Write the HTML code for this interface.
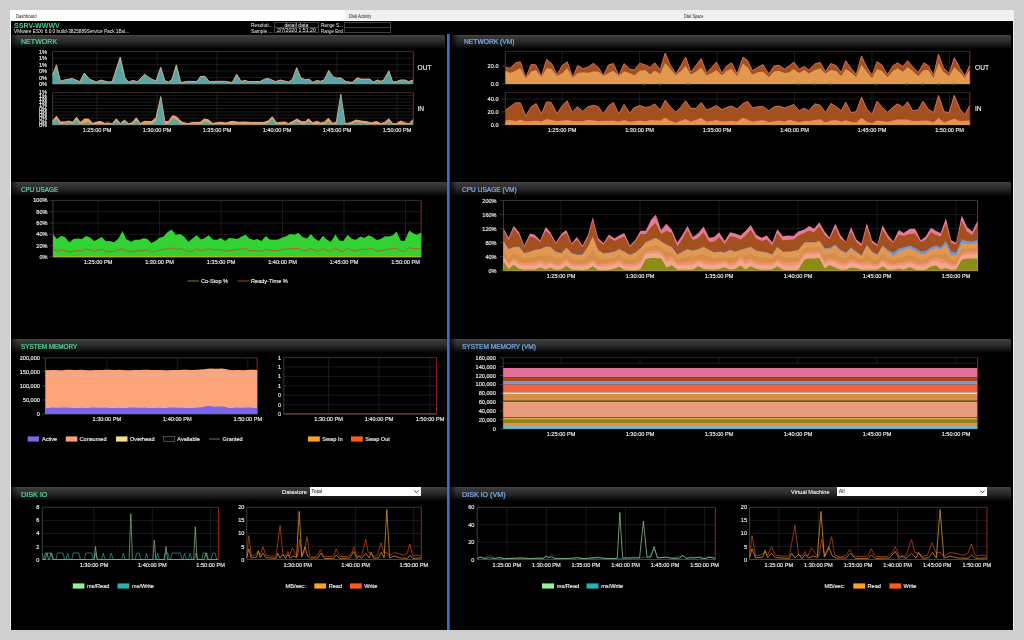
<!DOCTYPE html>
<html lang="en"><head><meta charset="utf-8"><title>SSRV-WWWV Dashboard</title>
<style>
html,body{margin:0;padding:0}
body{width:1024px;height:640px;overflow:hidden;background:#cfcfcf;font-family:"Liberation Sans", sans-serif;position:relative}
.win{position:absolute;left:9.9px;top:10.1px;width:1003.8px;height:620.4px;background:#f0f0f0}
.blk{position:absolute;left:10.9px;top:20.6px;width:1002px;height:609.2px;background:#000}
.tabs{position:absolute;left:10px;top:10.1px;width:1003.4px;height:10.6px;background:#f0f0f0;border-bottom:0.8px solid #fff;box-sizing:border-box;font-size:4.9px;color:#222;line-height:14.2px;overflow:hidden}
.tabs span{position:absolute;top:0;height:10.6px}
.tabs .tsel{position:absolute;left:0;top:0;width:335px;height:10.6px;background:#fff}
.host{position:absolute;left:14.2px;top:21.1px;font-size:7.5px;font-weight:bold;color:#46d08a;line-height:9px;white-space:nowrap}
.ver{position:absolute;left:14px;top:28.2px;font-size:5.25px;color:#f4f4f4;line-height:6px;white-space:nowrap}
.fl{position:absolute;font-size:5.3px;color:#f0f0f0;line-height:6px;white-space:nowrap}
.fb{position:absolute;height:5.9px;border:0.6px solid #404040;font-size:5.2px;color:#f4f4f4;line-height:5.2px;text-align:center;box-sizing:border-box;white-space:nowrap}
.sh{position:absolute;background:linear-gradient(#4a4a4a 0,#3c3c3c 8%,#2a2a2a 45%,#0e0e0e 85%,#000 100%);border-radius:1.5px 1.5px 0 0;font-size:7.4px;line-height:14.6px;white-space:nowrap;overflow:hidden}
.sh span{position:relative;top:0.9px;-webkit-text-stroke:0.22px currentColor}
.sh::before{content:"";position:absolute;left:0;top:0;bottom:0;width:7px;background:linear-gradient(90deg,rgba(0,0,0,.7),rgba(0,0,0,0))}
.div{position:absolute;left:446.6px;top:34px;width:3.3px;height:596px;background:linear-gradient(90deg,#2a55a8,#477ad8 25%,#3a68c4 60%,#15307a)}
.ddl{position:absolute;top:488.4px;font-size:6.1px;-webkit-text-stroke:0.1px #f4f4f4;color:#f4f4f4;line-height:7px;white-space:nowrap}
.dd{position:absolute;top:487.4px;height:8.8px;background:#fff;color:#111;font-size:5.2px;line-height:8.2px;padding-left:1.6px;box-sizing:border-box}
.dd svg{position:absolute;right:2.2px;top:2.6px}
svg.c{position:absolute;left:0;top:0}
svg.c text{font-family:"Liberation Sans", sans-serif;stroke:#f2f2f2;stroke-width:0.14px}
#app{position:absolute;left:0;top:0;width:1024px;height:640px;filter:blur(0.35px)}
</style></head><body>
<div id="app">
<div class="win"></div><div class="blk"></div>
<div class="tabs"><div class="tsel"></div><span style="left:6.2px;font-size:4.9px;display:inline-block;transform-origin:0 50%;transform:scaleX(0.8593)">Dashboard</span><span style="left:339.2px;font-size:4.9px;display:inline-block;transform-origin:0 50%;transform:scaleX(0.8532)">Disk Activity</span><span style="left:674.2px;font-size:4.9px;display:inline-block;transform-origin:0 50%;transform:scaleX(0.7828)">Disk Space</span></div>
<div class="host" style="font-size:7.5px;display:inline-block;transform-origin:0 50%;transform:scaleX(0.9421)">SSRV-WWWV</div>
<div class="ver" style="font-size:5.2px;display:inline-block;transform-origin:0 50%;transform:scaleX(0.9173)">VMware ESXi 6.0.0 build-3825889Service Pack 1Bui...</div>
<div class="fl" style="left:250.6px;top:22.1px;font-size:5.3px;display:inline-block;transform-origin:0 50%;transform:scaleX(0.9166)">Resoluti...</div>
<div class="fl" style="left:250.6px;top:27.9px;font-size:5.3px;display:inline-block;transform-origin:0 50%;transform:scaleX(0.9053)">Sample ...</div>
<div class="fb" style="left:273.6px;top:22.1px;width:45.6px">detail data</div>
<div class="fb" style="left:273.6px;top:27.4px;width:45.6px">2/7/2020 1:51:20</div>
<div class="fl" style="left:320.8px;top:22.1px;font-size:5.3px;display:inline-block;transform-origin:0 50%;transform:scaleX(0.8785)">Range S...</div>
<div class="fl" style="left:320.8px;top:27.9px;font-size:5.3px;display:inline-block;transform-origin:0 50%;transform:scaleX(0.8295)">Range End</div>
<div class="fb" style="left:344.4px;top:22.1px;width:46.4px"></div>
<div class="fb" style="left:344.4px;top:27.4px;width:46.4px"></div>
<div class="sh" style="left:11.2px;top:34.6px;width:434px;height:14px"><span style="color:#55d898;margin-left:9.7px;font-size:7.4px;display:inline-block;transform-origin:0 50%;transform:scaleX(0.9571)">NETWORK</span></div><div class="sh" style="left:452px;top:34.6px;width:559px;height:14px"><span style="color:#7caeee;margin-left:12.4px;font-size:7.4px;display:inline-block;transform-origin:0 50%;transform:scaleX(0.9051)">NETWORK (VM)</span></div><div class="sh" style="left:11.2px;top:182.0px;width:435.4px;height:14px"><span style="color:#55d898;margin-left:9.4px;font-size:7.4px;display:inline-block;transform-origin:0 50%;transform:scaleX(0.8534)">CPU USAGE</span></div><div class="sh" style="left:450px;top:182.0px;width:561px;height:14px"><span style="color:#7caeee;margin-left:11.6px;font-size:7.4px;display:inline-block;transform-origin:0 50%;transform:scaleX(0.8885)">CPU USAGE (VM)</span></div><div class="sh" style="left:11.2px;top:339.4px;width:435.4px;height:14px"><span style="color:#55d898;margin-left:9.4px;font-size:7.4px;display:inline-block;transform-origin:0 50%;transform:scaleX(0.8575)">SYSTEM MEMORY</span></div><div class="sh" style="left:450px;top:339.4px;width:561px;height:14px"><span style="color:#7caeee;margin-left:11.6px;font-size:7.4px;display:inline-block;transform-origin:0 50%;transform:scaleX(0.8863)">SYSTEM MEMORY (VM)</span></div><div class="sh" style="left:11.2px;top:486.8px;width:435.4px;height:14px"><span style="color:#55d898;margin-left:9.4px;font-size:7.4px;display:inline-block;transform-origin:0 50%;transform:scaleX(0.9764)">DISK IO</span></div><div class="sh" style="left:450px;top:486.8px;width:561px;height:14px"><span style="color:#7caeee;margin-left:11.6px;font-size:7.4px;display:inline-block;transform-origin:0 50%;transform:scaleX(0.9641)">DISK IO (VM)</span></div>
<div class="div"></div>
<div class="ddl" style="left:282.4px;font-size:6.1px;display:inline-block;transform-origin:0 50%;transform:scaleX(0.9453)">Datastore</div>
<div class="dd" style="left:309.6px;width:111.2px">Total<svg width="5" height="3.4" viewBox="0 0 5 3.4"><path d="M0.4 0.5 L2.5 2.7 L4.6 0.5" fill="none" stroke="#222" stroke-width="0.9"/></svg></div>
<div class="ddl" style="left:790.8px;font-size:6.1px;display:inline-block;transform-origin:0 50%;transform:scaleX(0.9205)">Virtual Machine</div>
<div class="dd" style="left:837.2px;width:149.6px">All<svg width="5" height="3.4" viewBox="0 0 5 3.4"><path d="M0.4 0.5 L2.5 2.7 L4.6 0.5" fill="none" stroke="#222" stroke-width="0.9"/></svg></div>
<svg class="c" width="1024" height="640" viewBox="0 0 1024 640">
<line x1="52.6" y1="51.60" x2="413.3" y2="51.60" stroke="#2c2c2c" stroke-width="0.6"/><line x1="52.6" y1="58.08" x2="413.3" y2="58.08" stroke="#2c2c2c" stroke-width="0.6"/><line x1="52.6" y1="64.56" x2="413.3" y2="64.56" stroke="#2c2c2c" stroke-width="0.6"/><line x1="52.6" y1="71.04" x2="413.3" y2="71.04" stroke="#2c2c2c" stroke-width="0.6"/><line x1="52.6" y1="77.52" x2="413.3" y2="77.52" stroke="#2c2c2c" stroke-width="0.6"/><line x1="52.6" y1="84.00" x2="413.3" y2="84.00" stroke="#2c2c2c" stroke-width="0.6"/><line x1="97.00" y1="51.6" x2="97.00" y2="84.0" stroke="#2c2c2c" stroke-width="0.6"/><line x1="157.00" y1="51.6" x2="157.00" y2="84.0" stroke="#2c2c2c" stroke-width="0.6"/><line x1="217.00" y1="51.6" x2="217.00" y2="84.0" stroke="#2c2c2c" stroke-width="0.6"/><line x1="277.00" y1="51.6" x2="277.00" y2="84.0" stroke="#2c2c2c" stroke-width="0.6"/><line x1="337.00" y1="51.6" x2="337.00" y2="84.0" stroke="#2c2c2c" stroke-width="0.6"/><line x1="397.00" y1="51.6" x2="397.00" y2="84.0" stroke="#2c2c2c" stroke-width="0.6"/><line x1="52.6" y1="51.60" x2="413.3" y2="51.60" stroke="#403836" stroke-width="0.7"/><line x1="52.60" y1="51.6" x2="52.60" y2="84.0" stroke="#555555" stroke-width="0.7"/><line x1="52.6" y1="84.00" x2="413.3" y2="84.00" stroke="#555555" stroke-width="0.7"/><line x1="413.30" y1="51.6" x2="413.30" y2="84.0" stroke="#9a2218" stroke-width="1.0"/><text x="47.1" y="53.6" font-size="5.6" text-anchor="end" fill="#f2f2f2" font-weight="normal" >1%</text><text x="47.1" y="60.1" font-size="5.6" text-anchor="end" fill="#f2f2f2" font-weight="normal" >1%</text><text x="47.1" y="66.6" font-size="5.6" text-anchor="end" fill="#f2f2f2" font-weight="normal" >1%</text><text x="47.1" y="73.0" font-size="5.6" text-anchor="end" fill="#f2f2f2" font-weight="normal" >0%</text><text x="47.1" y="79.5" font-size="5.6" text-anchor="end" fill="#f2f2f2" font-weight="normal" >0%</text><text x="47.1" y="86.0" font-size="5.6" text-anchor="end" fill="#f2f2f2" font-weight="normal" >0%</text><polygon points="52.5,84.0 52.5,75.3 56.4,64.8 60.4,81.3 65.2,79.7 72.2,78.5 79.8,81.6 84.3,73.0 89.4,79.1 96.3,82.0 100.8,80.1 108.4,82.0 112.2,81.6 120.2,57.1 124.9,77.8 128.7,82.0 132.5,80.4 137.6,81.6 144.6,74.3 150.3,78.5 156.0,81.0 160.7,67.3 164.9,80.8 168.7,82.0 172.1,79.1 176.3,64.8 180.8,82.5 187.8,81.3 196.7,81.6 200.5,76.6 204.9,76.2 209.4,81.6 216.3,81.3 224.6,81.3 232.2,82.5 236.7,74.3 241.1,81.3 244.9,80.4 248.7,81.6 260.1,81.6 264.6,79.1 268.4,78.5 275.4,81.6 280.4,80.0 288.7,82.0 292.5,79.1 296.7,67.7 300.8,77.8 305.2,79.7 309.0,79.1 312.9,82.3 316.7,80.4 320.5,81.3 324.3,79.7 328.7,70.5 333.2,77.0 337.0,78.2 340.8,77.8 345.9,81.6 352.2,82.3 357.3,77.8 361.1,79.1 370.0,79.1 373.1,82.0 377.6,80.0 380.8,81.3 383.9,79.7 388.8,70.8 392.8,82.0 396.6,81.6 400.4,80.0 404.9,80.0 408.7,81.6 412.9,80.0 412.9,84.0" fill="#5aa5a8" /><polyline points="52.5,75.3 56.4,64.8 60.4,81.3 65.2,79.7 72.2,78.5 79.8,81.6 84.3,73.0 89.4,79.1 96.3,82.0 100.8,80.1 108.4,82.0 112.2,81.6 120.2,57.1 124.9,77.8 128.7,82.0 132.5,80.4 137.6,81.6 144.6,74.3 150.3,78.5 156.0,81.0 160.7,67.3 164.9,80.8 168.7,82.0 172.1,79.1 176.3,64.8 180.8,82.5 187.8,81.3 196.7,81.6 200.5,76.6 204.9,76.2 209.4,81.6 216.3,81.3 224.6,81.3 232.2,82.5 236.7,74.3 241.1,81.3 244.9,80.4 248.7,81.6 260.1,81.6 264.6,79.1 268.4,78.5 275.4,81.6 280.4,80.0 288.7,82.0 292.5,79.1 296.7,67.7 300.8,77.8 305.2,79.7 309.0,79.1 312.9,82.3 316.7,80.4 320.5,81.3 324.3,79.7 328.7,70.5 333.2,77.0 337.0,78.2 340.8,77.8 345.9,81.6 352.2,82.3 357.3,77.8 361.1,79.1 370.0,79.1 373.1,82.0 377.6,80.0 380.8,81.3 383.9,79.7 388.8,70.8 392.8,82.0 396.6,81.6 400.4,80.0 404.9,80.0 408.7,81.6 412.9,80.0" fill="none" stroke="#f0b48a" stroke-width="0.9" stroke-linejoin="round"/><text x="417.5" y="69.6" font-size="6.6" text-anchor="start" fill="#f2f2f2" font-weight="normal" >OUT</text>
<line x1="52.6" y1="92.40" x2="413.3" y2="92.40" stroke="#2c2c2c" stroke-width="0.6"/><line x1="52.6" y1="95.64" x2="413.3" y2="95.64" stroke="#2c2c2c" stroke-width="0.6"/><line x1="52.6" y1="98.88" x2="413.3" y2="98.88" stroke="#2c2c2c" stroke-width="0.6"/><line x1="52.6" y1="102.12" x2="413.3" y2="102.12" stroke="#2c2c2c" stroke-width="0.6"/><line x1="52.6" y1="105.36" x2="413.3" y2="105.36" stroke="#2c2c2c" stroke-width="0.6"/><line x1="52.6" y1="108.60" x2="413.3" y2="108.60" stroke="#2c2c2c" stroke-width="0.6"/><line x1="52.6" y1="111.84" x2="413.3" y2="111.84" stroke="#2c2c2c" stroke-width="0.6"/><line x1="52.6" y1="115.08" x2="413.3" y2="115.08" stroke="#2c2c2c" stroke-width="0.6"/><line x1="52.6" y1="118.32" x2="413.3" y2="118.32" stroke="#2c2c2c" stroke-width="0.6"/><line x1="52.6" y1="121.56" x2="413.3" y2="121.56" stroke="#2c2c2c" stroke-width="0.6"/><line x1="52.6" y1="124.80" x2="413.3" y2="124.80" stroke="#2c2c2c" stroke-width="0.6"/><line x1="97.00" y1="92.4" x2="97.00" y2="124.8" stroke="#2c2c2c" stroke-width="0.6"/><line x1="157.00" y1="92.4" x2="157.00" y2="124.8" stroke="#2c2c2c" stroke-width="0.6"/><line x1="217.00" y1="92.4" x2="217.00" y2="124.8" stroke="#2c2c2c" stroke-width="0.6"/><line x1="277.00" y1="92.4" x2="277.00" y2="124.8" stroke="#2c2c2c" stroke-width="0.6"/><line x1="337.00" y1="92.4" x2="337.00" y2="124.8" stroke="#2c2c2c" stroke-width="0.6"/><line x1="397.00" y1="92.4" x2="397.00" y2="124.8" stroke="#2c2c2c" stroke-width="0.6"/><line x1="52.6" y1="92.40" x2="413.3" y2="92.40" stroke="#403836" stroke-width="0.7"/><line x1="52.60" y1="92.4" x2="52.60" y2="124.8" stroke="#555555" stroke-width="0.7"/><line x1="52.6" y1="124.80" x2="413.3" y2="124.80" stroke="#555555" stroke-width="0.7"/><line x1="413.30" y1="92.4" x2="413.30" y2="124.8" stroke="#9a2218" stroke-width="1.0"/><text x="47.1" y="94.4" font-size="5.6" text-anchor="end" fill="#f2f2f2" font-weight="normal" >1%</text><text x="47.1" y="97.6" font-size="5.6" text-anchor="end" fill="#f2f2f2" font-weight="normal" >1%</text><text x="47.1" y="100.9" font-size="5.6" text-anchor="end" fill="#f2f2f2" font-weight="normal" >1%</text><text x="47.1" y="104.1" font-size="5.6" text-anchor="end" fill="#f2f2f2" font-weight="normal" >1%</text><text x="47.1" y="107.4" font-size="5.6" text-anchor="end" fill="#f2f2f2" font-weight="normal" >1%</text><text x="47.1" y="110.6" font-size="5.6" text-anchor="end" fill="#f2f2f2" font-weight="normal" >0%</text><text x="47.1" y="113.8" font-size="5.6" text-anchor="end" fill="#f2f2f2" font-weight="normal" >0%</text><text x="47.1" y="117.1" font-size="5.6" text-anchor="end" fill="#f2f2f2" font-weight="normal" >0%</text><text x="47.1" y="120.3" font-size="5.6" text-anchor="end" fill="#f2f2f2" font-weight="normal" >0%</text><text x="47.1" y="123.6" font-size="5.6" text-anchor="end" fill="#f2f2f2" font-weight="normal" >0%</text><text x="47.1" y="126.8" font-size="5.6" text-anchor="end" fill="#f2f2f2" font-weight="normal" >0%</text><text x="97.0" y="132.2" font-size="5.6" text-anchor="middle" fill="#f2f2f2" font-weight="normal" >1:25:00 PM</text><text x="157.0" y="132.2" font-size="5.6" text-anchor="middle" fill="#f2f2f2" font-weight="normal" >1:30:00 PM</text><text x="217.0" y="132.2" font-size="5.6" text-anchor="middle" fill="#f2f2f2" font-weight="normal" >1:35:00 PM</text><text x="277.0" y="132.2" font-size="5.6" text-anchor="middle" fill="#f2f2f2" font-weight="normal" >1:40:00 PM</text><text x="337.0" y="132.2" font-size="5.6" text-anchor="middle" fill="#f2f2f2" font-weight="normal" >1:45:00 PM</text><text x="397.0" y="132.2" font-size="5.6" text-anchor="middle" fill="#f2f2f2" font-weight="normal" >1:50:00 PM</text><polygon points="52.5,124.8 52.5,121.3 56.4,116.2 60.4,122.0 65.2,122.0 68.4,121.0 72.8,122.3 76.4,117.2 80.5,122.5 84.3,119.1 88.7,119.1 92.5,123.3 100.2,121.3 104.6,123.3 108.4,122.9 112.2,123.8 116.3,118.8 120.5,123.5 124.3,120.0 128.7,123.8 132.5,122.5 136.3,117.8 140.4,123.5 144.6,121.3 151.6,121.6 156.0,117.8 160.8,96.6 164.9,121.6 168.7,121.3 172.5,115.7 176.3,116.6 180.0,120.4 182.7,122.5 187.8,123.5 192.8,122.5 200.5,122.3 204.3,119.1 208.1,119.7 212.5,123.3 220.2,122.3 225.9,122.9 232.2,121.3 238.6,122.3 244.3,122.0 251.2,122.5 263.9,122.5 268.4,120.8 272.2,116.6 276.6,122.9 284.3,122.0 288.7,123.5 292.5,121.6 296.9,119.1 301.4,121.6 305.2,122.0 308.4,118.8 312.9,122.9 316.7,121.3 320.5,122.9 324.3,122.3 328.3,118.2 332.5,123.3 336.3,122.3 340.8,94.3 345.2,123.5 349.7,122.9 356.0,120.0 361.1,121.0 366.2,121.6 371.2,122.9 376.3,121.6 380.8,123.5 384.6,122.5 388.8,118.8 392.8,123.8 396.6,123.5 400.8,121.0 404.9,122.9 409.3,123.5 412.9,119.5 412.9,124.8" fill="#f09a60" /><polyline points="52.5,121.3 56.4,116.2 60.4,122.0 65.2,122.0 68.4,121.0 72.8,122.3 76.4,117.2 80.5,122.5 84.3,119.1 88.7,119.1 92.5,123.3 100.2,121.3 104.6,123.3 108.4,122.9 112.2,123.8 116.3,118.8 120.5,123.5 124.3,120.0 128.7,123.8 132.5,122.5 136.3,117.8 140.4,123.5 144.6,121.3 151.6,121.6 156.0,117.8 160.8,96.6 164.9,121.6 168.7,121.3 172.5,115.7 176.3,116.6 180.0,120.4 182.7,122.5 187.8,123.5 192.8,122.5 200.5,122.3 204.3,119.1 208.1,119.7 212.5,123.3 220.2,122.3 225.9,122.9 232.2,121.3 238.6,122.3 244.3,122.0 251.2,122.5 263.9,122.5 268.4,120.8 272.2,116.6 276.6,122.9 284.3,122.0 288.7,123.5 292.5,121.6 296.9,119.1 301.4,121.6 305.2,122.0 308.4,118.8 312.9,122.9 316.7,121.3 320.5,122.9 324.3,122.3 328.3,118.2 332.5,123.3 336.3,122.3 340.8,94.3 345.2,123.5 349.7,122.9 356.0,120.0 361.1,121.0 366.2,121.6 371.2,122.9 376.3,121.6 380.8,123.5 384.6,122.5 388.8,118.8 392.8,123.8 396.6,123.5 400.8,121.0 404.9,122.9 409.3,123.5 412.9,119.5" fill="none" stroke="#f5b088" stroke-width="0.9" stroke-linejoin="round"/><polygon points="52.5,124.8 52.5,122.3 56.4,119.1 60.4,124.2 68.4,122.3 72.8,124.2 76.4,119.7 80.5,124.2 84.3,122.9 88.7,122.3 92.5,124.6 112.2,124.6 116.3,120.4 120.5,124.6 124.3,121.6 128.7,124.6 132.5,124.2 136.3,120.4 140.4,124.6 151.6,124.2 156.0,121.0 160.8,97.5 164.9,124.2 168.7,123.5 172.5,118.5 176.3,119.7 180.0,122.9 182.7,124.6 200.5,124.6 204.3,121.6 208.1,122.3 212.5,124.6 263.9,124.6 268.4,122.9 272.2,118.5 276.6,124.6 288.7,124.6 292.5,123.5 296.9,121.3 301.4,124.2 305.2,124.2 308.4,121.3 312.9,124.6 324.3,124.6 328.3,121.0 332.5,124.6 336.3,124.2 340.8,95.0 345.2,124.6 349.7,124.6 356.0,122.0 361.1,122.9 366.2,123.5 371.2,124.6 384.6,124.6 388.8,121.3 392.8,124.6 409.3,124.6 412.9,121.3 412.9,124.8" fill="#5aa5a8" /><text x="417.5" y="110.6" font-size="6.6" text-anchor="start" fill="#f2f2f2" font-weight="normal" >IN</text>
<line x1="562.00" y1="51.6" x2="562.00" y2="84.0" stroke="#2c2c2c" stroke-width="0.6"/><line x1="639.50" y1="51.6" x2="639.50" y2="84.0" stroke="#2c2c2c" stroke-width="0.6"/><line x1="717.00" y1="51.6" x2="717.00" y2="84.0" stroke="#2c2c2c" stroke-width="0.6"/><line x1="794.50" y1="51.6" x2="794.50" y2="84.0" stroke="#2c2c2c" stroke-width="0.6"/><line x1="872.00" y1="51.6" x2="872.00" y2="84.0" stroke="#2c2c2c" stroke-width="0.6"/><line x1="949.50" y1="51.6" x2="949.50" y2="84.0" stroke="#2c2c2c" stroke-width="0.6"/><line x1="505.3" y1="51.60" x2="969.8" y2="51.60" stroke="#403836" stroke-width="0.7"/><line x1="505.30" y1="51.6" x2="505.30" y2="84.0" stroke="#555555" stroke-width="0.7"/><line x1="505.3" y1="84.00" x2="969.8" y2="84.00" stroke="#555555" stroke-width="0.7"/><line x1="969.80" y1="51.6" x2="969.80" y2="84.0" stroke="#9a2218" stroke-width="1.0"/><text x="498.5" y="68.2" font-size="5.6" text-anchor="end" fill="#f2f2f2" font-weight="normal" >20.0</text><line x1="501.8" y1="66.20" x2="505.3" y2="66.20" stroke="#555555" stroke-width="0.6"/><text x="498.5" y="86.0" font-size="5.6" text-anchor="end" fill="#f2f2f2" font-weight="normal" >0.0</text><line x1="501.8" y1="84.00" x2="505.3" y2="84.00" stroke="#555555" stroke-width="0.6"/><line x1="505.3" y1="66.20" x2="969.8" y2="66.20" stroke="#2c2c2c" stroke-width="0.6"/><polygon points="505.5,84.0 505.5,67.5 510.2,68.3 515.6,62.8 520.3,61.8 525.8,77.7 531.2,64.4 535.9,64.9 541.4,76.1 546.6,59.4 551.6,63.6 557.0,74.6 562.5,65.2 567.2,61.8 572.7,76.9 577.8,65.5 582.8,68.6 587.5,67.5 593.4,63.3 598.4,67.5 603.4,75.3 608.6,64.9 613.3,63.6 618.8,75.3 624.2,63.6 629.7,69.1 634.4,69.9 639.8,63.3 645.3,64.9 650.0,67.5 654.7,62.8 660.2,69.9 665.2,53.0 670.3,65.2 675.8,73.8 681.2,65.2 685.6,57.1 690.9,72.2 696.1,65.2 701.2,58.6 706.6,73.0 711.7,67.5 716.4,62.1 721.9,73.0 726.6,66.0 731.6,62.8 737.0,73.8 743.0,57.1 747.7,60.5 752.3,70.7 757.8,67.5 762.8,64.4 768.8,73.8 774.2,66.0 778.9,65.2 784.4,69.1 789.1,66.0 793.8,62.1 799.2,69.1 804.4,66.5 808.8,70.0 814.9,63.8 820.2,62.4 825.5,71.7 830.8,63.5 836.0,65.6 841.3,72.6 845.7,60.7 851.0,68.2 856.2,74.4 861.5,55.9 866.8,67.3 872.1,75.2 877.0,61.7 881.7,64.7 887.4,74.4 893.2,65.6 897.6,62.9 902.8,66.5 907.6,60.7 912.5,66.5 918.1,72.6 923.9,62.9 928.3,65.6 933.6,75.2 938.5,54.1 943.3,67.3 949.1,73.5 954.3,57.7 960.0,68.2 964.9,76.1 969.6,65.6 969.6,84.0" fill="#a34f1e" /><polyline points="505.5,67.5 510.2,68.3 515.6,62.8 520.3,61.8 525.8,77.7 531.2,64.4 535.9,64.9 541.4,76.1 546.6,59.4 551.6,63.6 557.0,74.6 562.5,65.2 567.2,61.8 572.7,76.9 577.8,65.5 582.8,68.6 587.5,67.5 593.4,63.3 598.4,67.5 603.4,75.3 608.6,64.9 613.3,63.6 618.8,75.3 624.2,63.6 629.7,69.1 634.4,69.9 639.8,63.3 645.3,64.9 650.0,67.5 654.7,62.8 660.2,69.9 665.2,53.0 670.3,65.2 675.8,73.8 681.2,65.2 685.6,57.1 690.9,72.2 696.1,65.2 701.2,58.6 706.6,73.0 711.7,67.5 716.4,62.1 721.9,73.0 726.6,66.0 731.6,62.8 737.0,73.8 743.0,57.1 747.7,60.5 752.3,70.7 757.8,67.5 762.8,64.4 768.8,73.8 774.2,66.0 778.9,65.2 784.4,69.1 789.1,66.0 793.8,62.1 799.2,69.1 804.4,66.5 808.8,70.0 814.9,63.8 820.2,62.4 825.5,71.7 830.8,63.5 836.0,65.6 841.3,72.6 845.7,60.7 851.0,68.2 856.2,74.4 861.5,55.9 866.8,67.3 872.1,75.2 877.0,61.7 881.7,64.7 887.4,74.4 893.2,65.6 897.6,62.9 902.8,66.5 907.6,60.7 912.5,66.5 918.1,72.6 923.9,62.9 928.3,65.6 933.6,75.2 938.5,54.1 943.3,67.3 949.1,73.5 954.3,57.7 960.0,68.2 964.9,76.1 969.6,65.6" fill="none" stroke="#d9776a" stroke-width="0.9" stroke-linejoin="round"/><polygon points="505.5,84.0 505.5,70.7 510.2,73.0 515.6,70.7 520.3,68.3 525.8,78.5 531.2,71.4 535.9,69.9 541.4,76.9 546.6,68.3 551.6,69.1 557.0,76.1 562.5,73.0 567.2,68.3 572.7,77.7 577.8,73.0 582.8,72.2 587.5,72.7 593.4,71.4 598.4,71.4 603.4,76.1 608.6,73.0 613.3,70.7 618.8,76.1 624.2,71.4 629.7,73.0 634.4,75.3 639.8,70.7 645.3,69.9 650.0,74.6 654.7,70.7 660.2,73.8 665.2,62.8 670.3,69.1 675.8,75.3 681.2,70.7 685.6,66.0 690.9,74.6 696.1,71.4 701.2,67.5 706.6,75.3 711.7,73.0 716.4,69.9 721.9,75.3 726.6,70.7 731.6,69.1 737.0,75.8 743.0,63.6 747.7,67.5 752.3,74.6 757.8,72.2 762.8,71.4 768.8,76.9 774.2,71.4 778.9,70.7 784.4,73.0 789.1,72.2 793.8,69.1 799.2,73.0 804.4,70.0 808.8,73.5 814.9,70.0 820.2,68.2 825.5,73.5 830.8,70.0 836.0,70.8 841.3,76.1 845.7,69.1 851.0,72.6 856.2,77.0 861.5,64.7 866.8,71.7 872.1,77.9 877.0,69.1 881.7,70.8 887.4,77.0 893.2,70.8 897.6,68.2 902.8,71.7 907.6,67.3 912.5,70.8 918.1,76.1 923.9,70.0 928.3,70.0 933.6,77.9 938.5,62.9 943.3,71.7 949.1,76.1 954.3,67.3 960.0,72.6 964.9,77.9 969.6,70.0 969.6,84.0" fill="#e2994f" /><ellipse cx="643.8" cy="83.6" rx="2.2" ry="0.9" fill="#8aa22e"/><ellipse cx="660" cy="83.6" rx="2.2" ry="0.9" fill="#8aa22e"/><ellipse cx="688" cy="83.6" rx="2.2" ry="0.9" fill="#8aa22e"/><ellipse cx="798" cy="83.6" rx="2.2" ry="0.9" fill="#8aa22e"/><ellipse cx="814" cy="83.6" rx="2.2" ry="0.9" fill="#8aa22e"/><ellipse cx="830" cy="83.6" rx="2.2" ry="0.9" fill="#8aa22e"/><ellipse cx="875.6" cy="83.6" rx="2.2" ry="0.9" fill="#8aa22e"/><ellipse cx="907" cy="83.6" rx="2.2" ry="0.9" fill="#8aa22e"/><ellipse cx="923" cy="83.6" rx="2.2" ry="0.9" fill="#8aa22e"/><ellipse cx="939" cy="83.6" rx="2.2" ry="0.9" fill="#8aa22e"/><ellipse cx="954" cy="83.6" rx="2.2" ry="0.9" fill="#8aa22e"/><text x="975.0" y="69.6" font-size="6.6" text-anchor="start" fill="#f2f2f2" font-weight="normal" >OUT</text>
<line x1="562.00" y1="92.4" x2="562.00" y2="124.8" stroke="#2c2c2c" stroke-width="0.6"/><line x1="639.50" y1="92.4" x2="639.50" y2="124.8" stroke="#2c2c2c" stroke-width="0.6"/><line x1="717.00" y1="92.4" x2="717.00" y2="124.8" stroke="#2c2c2c" stroke-width="0.6"/><line x1="794.50" y1="92.4" x2="794.50" y2="124.8" stroke="#2c2c2c" stroke-width="0.6"/><line x1="872.00" y1="92.4" x2="872.00" y2="124.8" stroke="#2c2c2c" stroke-width="0.6"/><line x1="949.50" y1="92.4" x2="949.50" y2="124.8" stroke="#2c2c2c" stroke-width="0.6"/><line x1="505.3" y1="92.40" x2="969.8" y2="92.40" stroke="#403836" stroke-width="0.7"/><line x1="505.30" y1="92.4" x2="505.30" y2="124.8" stroke="#555555" stroke-width="0.7"/><line x1="505.3" y1="124.80" x2="969.8" y2="124.80" stroke="#555555" stroke-width="0.7"/><line x1="969.80" y1="92.4" x2="969.80" y2="124.8" stroke="#9a2218" stroke-width="1.0"/><text x="498.5" y="101.0" font-size="5.6" text-anchor="end" fill="#f2f2f2" font-weight="normal" >40.0</text><line x1="501.8" y1="99.00" x2="505.3" y2="99.00" stroke="#555555" stroke-width="0.6"/><text x="498.5" y="113.9" font-size="5.6" text-anchor="end" fill="#f2f2f2" font-weight="normal" >20.0</text><line x1="501.8" y1="111.90" x2="505.3" y2="111.90" stroke="#555555" stroke-width="0.6"/><text x="498.5" y="126.8" font-size="5.6" text-anchor="end" fill="#f2f2f2" font-weight="normal" >0.0</text><line x1="501.8" y1="124.80" x2="505.3" y2="124.80" stroke="#555555" stroke-width="0.6"/><text x="562.0" y="132.2" font-size="5.6" text-anchor="middle" fill="#f2f2f2" font-weight="normal" >1:25:00 PM</text><text x="639.5" y="132.2" font-size="5.6" text-anchor="middle" fill="#f2f2f2" font-weight="normal" >1:30:00 PM</text><text x="717.0" y="132.2" font-size="5.6" text-anchor="middle" fill="#f2f2f2" font-weight="normal" >1:35:00 PM</text><text x="794.5" y="132.2" font-size="5.6" text-anchor="middle" fill="#f2f2f2" font-weight="normal" >1:40:00 PM</text><text x="872.0" y="132.2" font-size="5.6" text-anchor="middle" fill="#f2f2f2" font-weight="normal" >1:45:00 PM</text><text x="949.5" y="132.2" font-size="5.6" text-anchor="middle" fill="#f2f2f2" font-weight="normal" >1:50:00 PM</text><line x1="505.3" y1="99.00" x2="969.8" y2="99.00" stroke="#2c2c2c" stroke-width="0.6"/><line x1="505.3" y1="111.90" x2="969.8" y2="111.90" stroke="#2c2c2c" stroke-width="0.6"/><polygon points="505.5,124.8 505.5,109.9 510.2,106.8 515.6,102.8 520.3,102.8 525.8,116.1 531.2,106.8 536.2,103.6 541.4,113.8 546.6,101.8 551.2,102.4 557.0,113.8 562.5,105.2 567.2,100.8 572.2,112.2 577.3,106.8 582.8,111.4 587.8,106.8 593.4,105.2 598.4,106.8 603.4,113.8 608.6,106.0 613.3,102.4 618.8,113.8 624.2,104.4 629.7,113.0 634.4,107.5 639.8,105.5 645.3,107.5 650.0,106.8 654.7,103.9 660.2,109.9 665.2,100.2 670.3,106.8 675.8,112.2 681.2,106.8 685.6,100.8 690.9,108.3 696.1,108.3 701.2,102.4 706.6,109.9 711.7,108.0 716.4,105.5 721.9,109.6 726.6,107.5 731.6,106.0 737.0,109.1 743.0,103.6 747.7,101.3 752.3,108.0 757.8,106.8 762.8,106.4 768.8,110.7 774.2,106.8 778.9,106.0 784.4,108.0 789.1,106.4 793.8,104.4 799.2,110.7 804.4,108.2 808.8,110.8 814.9,103.8 820.2,105.2 825.5,112.6 830.8,103.5 836.0,106.5 841.3,110.8 845.7,102.1 851.0,112.6 856.2,111.7 861.5,97.1 866.8,109.1 872.1,114.4 877.0,101.2 881.7,106.5 887.4,112.3 893.2,107.0 897.6,103.8 902.8,107.3 907.6,101.7 912.5,110.5 918.1,110.0 923.0,101.2 928.3,109.1 933.6,112.6 938.5,95.4 944.1,111.7 949.1,112.6 954.3,95.4 960.0,109.1 964.9,114.7 969.6,105.6 969.6,124.8" fill="#a34f1e" /><polyline points="505.5,109.9 510.2,106.8 515.6,102.8 520.3,102.8 525.8,116.1 531.2,106.8 536.2,103.6 541.4,113.8 546.6,101.8 551.2,102.4 557.0,113.8 562.5,105.2 567.2,100.8 572.2,112.2 577.3,106.8 582.8,111.4 587.8,106.8 593.4,105.2 598.4,106.8 603.4,113.8 608.6,106.0 613.3,102.4 618.8,113.8 624.2,104.4 629.7,113.0 634.4,107.5 639.8,105.5 645.3,107.5 650.0,106.8 654.7,103.9 660.2,109.9 665.2,100.2 670.3,106.8 675.8,112.2 681.2,106.8 685.6,100.8 690.9,108.3 696.1,108.3 701.2,102.4 706.6,109.9 711.7,108.0 716.4,105.5 721.9,109.6 726.6,107.5 731.6,106.0 737.0,109.1 743.0,103.6 747.7,101.3 752.3,108.0 757.8,106.8 762.8,106.4 768.8,110.7 774.2,106.8 778.9,106.0 784.4,108.0 789.1,106.4 793.8,104.4 799.2,110.7 804.4,108.2 808.8,110.8 814.9,103.8 820.2,105.2 825.5,112.6 830.8,103.5 836.0,106.5 841.3,110.8 845.7,102.1 851.0,112.6 856.2,111.7 861.5,97.1 866.8,109.1 872.1,114.4 877.0,101.2 881.7,106.5 887.4,112.3 893.2,107.0 897.6,103.8 902.8,107.3 907.6,101.7 912.5,110.5 918.1,110.0 923.0,101.2 928.3,109.1 933.6,112.6 938.5,95.4 944.1,111.7 949.1,112.6 954.3,95.4 960.0,109.1 964.9,114.7 969.6,105.6" fill="none" stroke="#d9776a" stroke-width="0.9" stroke-linejoin="round"/><polygon points="505.5,124.8 505.5,120.5 510.2,120.0 515.6,121.1 520.3,119.7 525.8,121.3 535.9,120.8 541.4,121.4 546.6,118.9 557.0,121.1 567.2,120.0 572.7,121.1 582.8,121.3 587.8,119.7 598.4,121.1 613.3,120.5 618.8,121.4 624.2,120.0 629.7,121.8 639.8,120.5 645.3,121.4 650.0,120.0 654.7,120.3 660.2,120.5 665.2,117.7 670.3,120.8 675.8,122.4 685.6,118.9 690.9,121.6 701.2,118.0 706.6,121.6 716.4,120.0 721.9,121.6 731.6,120.8 737.0,121.6 743.0,117.7 752.3,121.6 762.8,120.0 768.8,122.1 778.9,120.5 784.4,121.6 789.1,119.7 799.2,122.1 804.4,120.7 808.8,121.0 814.9,120.0 820.2,119.3 825.5,122.3 830.8,120.5 836.0,120.0 841.3,121.4 845.7,120.2 851.0,121.8 856.2,122.3 861.5,117.9 866.8,121.4 872.1,123.2 877.0,120.5 887.4,121.8 897.6,119.6 907.6,119.6 912.5,121.0 928.3,120.5 933.6,122.3 938.5,117.9 944.1,122.3 949.1,120.5 954.3,118.8 960.0,121.0 969.6,120.5 969.6,124.8" fill="#ea8a55" /><polygon points="505.5,124.8 505.5,122.1 510.2,121.6 515.6,122.7 520.3,121.3 525.8,122.9 535.9,122.4 541.4,123.0 546.6,120.5 557.0,122.7 567.2,121.6 572.7,122.7 582.8,122.9 587.8,121.3 598.4,122.7 613.3,122.1 618.8,123.0 624.2,121.6 629.7,123.3 639.8,122.1 645.3,123.0 650.0,121.6 654.7,121.9 660.2,122.1 665.2,119.3 670.3,122.4 675.8,124.0 685.6,120.5 690.9,123.2 701.2,119.6 706.6,123.2 716.4,121.6 721.9,123.2 731.6,122.4 737.0,123.2 743.0,119.3 752.3,123.2 762.8,121.6 768.8,123.7 778.9,122.1 784.4,123.2 789.1,121.3 799.2,123.7 804.4,122.3 808.8,122.6 814.9,121.6 820.2,120.9 825.5,123.9 830.8,122.1 836.0,121.6 841.3,123.0 845.7,121.8 851.0,123.3 856.2,123.9 861.5,119.5 866.8,123.0 872.1,124.8 877.0,122.1 887.4,123.3 897.6,121.2 907.6,121.2 912.5,122.6 928.3,122.1 933.6,123.9 938.5,119.5 944.1,123.9 949.1,122.1 954.3,120.4 960.0,122.6 969.6,122.1 969.6,124.8" fill="#e2994f" /><text x="975.0" y="110.6" font-size="6.6" text-anchor="start" fill="#f2f2f2" font-weight="normal" >IN</text>
<line x1="53.0" y1="200.40" x2="421.2" y2="200.40" stroke="#2c2c2c" stroke-width="0.6"/><line x1="53.0" y1="211.72" x2="421.2" y2="211.72" stroke="#2c2c2c" stroke-width="0.6"/><line x1="53.0" y1="223.04" x2="421.2" y2="223.04" stroke="#2c2c2c" stroke-width="0.6"/><line x1="53.0" y1="234.36" x2="421.2" y2="234.36" stroke="#2c2c2c" stroke-width="0.6"/><line x1="53.0" y1="245.68" x2="421.2" y2="245.68" stroke="#2c2c2c" stroke-width="0.6"/><line x1="53.0" y1="257.00" x2="421.2" y2="257.00" stroke="#2c2c2c" stroke-width="0.6"/><line x1="98.00" y1="200.4" x2="98.00" y2="257.0" stroke="#2c2c2c" stroke-width="0.6"/><line x1="159.50" y1="200.4" x2="159.50" y2="257.0" stroke="#2c2c2c" stroke-width="0.6"/><line x1="221.00" y1="200.4" x2="221.00" y2="257.0" stroke="#2c2c2c" stroke-width="0.6"/><line x1="282.50" y1="200.4" x2="282.50" y2="257.0" stroke="#2c2c2c" stroke-width="0.6"/><line x1="344.00" y1="200.4" x2="344.00" y2="257.0" stroke="#2c2c2c" stroke-width="0.6"/><line x1="405.50" y1="200.4" x2="405.50" y2="257.0" stroke="#2c2c2c" stroke-width="0.6"/><line x1="53.0" y1="200.40" x2="421.2" y2="200.40" stroke="#403836" stroke-width="0.7"/><line x1="53.00" y1="200.4" x2="53.00" y2="257.0" stroke="#555555" stroke-width="0.7"/><line x1="53.0" y1="257.00" x2="421.2" y2="257.00" stroke="#555555" stroke-width="0.7"/><line x1="421.20" y1="200.4" x2="421.20" y2="257.0" stroke="#9a2218" stroke-width="1.0"/><text x="47.5" y="202.4" font-size="5.6" text-anchor="end" fill="#f2f2f2" font-weight="normal" >100%</text><line x1="49.5" y1="200.40" x2="53.0" y2="200.40" stroke="#555555" stroke-width="0.6"/><text x="47.5" y="213.7" font-size="5.6" text-anchor="end" fill="#f2f2f2" font-weight="normal" >80%</text><line x1="49.5" y1="211.72" x2="53.0" y2="211.72" stroke="#555555" stroke-width="0.6"/><text x="47.5" y="225.0" font-size="5.6" text-anchor="end" fill="#f2f2f2" font-weight="normal" >60%</text><line x1="49.5" y1="223.04" x2="53.0" y2="223.04" stroke="#555555" stroke-width="0.6"/><text x="47.5" y="236.4" font-size="5.6" text-anchor="end" fill="#f2f2f2" font-weight="normal" >40%</text><line x1="49.5" y1="234.36" x2="53.0" y2="234.36" stroke="#555555" stroke-width="0.6"/><text x="47.5" y="247.7" font-size="5.6" text-anchor="end" fill="#f2f2f2" font-weight="normal" >20%</text><line x1="49.5" y1="245.68" x2="53.0" y2="245.68" stroke="#555555" stroke-width="0.6"/><text x="47.5" y="259.0" font-size="5.6" text-anchor="end" fill="#f2f2f2" font-weight="normal" >0%</text><line x1="49.5" y1="257.00" x2="53.0" y2="257.00" stroke="#555555" stroke-width="0.6"/><text x="98.0" y="264.2" font-size="5.6" text-anchor="middle" fill="#f2f2f2" font-weight="normal" >1:25:00 PM</text><text x="159.5" y="264.2" font-size="5.6" text-anchor="middle" fill="#f2f2f2" font-weight="normal" >1:30:00 PM</text><text x="221.0" y="264.2" font-size="5.6" text-anchor="middle" fill="#f2f2f2" font-weight="normal" >1:35:00 PM</text><text x="282.5" y="264.2" font-size="5.6" text-anchor="middle" fill="#f2f2f2" font-weight="normal" >1:40:00 PM</text><text x="344.0" y="264.2" font-size="5.6" text-anchor="middle" fill="#f2f2f2" font-weight="normal" >1:45:00 PM</text><text x="405.5" y="264.2" font-size="5.6" text-anchor="middle" fill="#f2f2f2" font-weight="normal" >1:50:00 PM</text><polygon points="53.0,257.0 53.0,234.1 52.8,234.1 57.0,239.1 61.4,235.7 65.2,237.2 69.3,242.3 73.5,239.1 77.9,238.5 81.7,239.1 86.2,236.0 90.0,237.5 94.2,241.0 98.2,239.1 101.8,237.0 105.9,241.3 109.7,241.0 114.1,242.3 118.5,238.5 122.6,231.1 126.2,239.1 131.2,241.7 135.1,239.8 139.5,239.8 143.3,238.2 147.1,238.8 151.6,242.9 155.4,241.0 159.2,237.9 163.6,236.6 167.4,232.2 171.6,229.4 175.7,234.7 180.2,234.1 184.0,236.6 188.4,241.7 192.8,238.2 196.7,235.3 201.1,239.5 204.9,237.9 208.7,235.3 212.9,239.5 217.0,239.8 220.8,237.9 225.2,241.0 229.0,237.9 233.5,238.5 237.3,239.1 241.7,236.6 245.5,234.7 249.3,238.5 253.8,240.0 257.3,239.1 261.4,241.0 265.9,236.0 269.7,239.5 274.1,239.8 277.9,239.5 282.4,237.5 286.2,236.2 290.0,234.1 295.0,234.7 298.2,232.8 302.6,237.0 307.1,238.5 310.9,234.1 314.7,238.5 318.9,241.0 322.9,235.7 326.7,239.5 330.8,242.1 335.4,234.4 339.4,240.4 343.2,241.0 347.7,234.7 352.1,239.1 355.9,239.8 360.4,236.6 364.2,237.9 368.6,235.3 372.4,237.0 376.9,240.0 380.7,239.1 385.1,236.2 388.9,236.6 392.8,235.3 396.6,231.5 400.6,240.4 404.4,241.0 409.3,230.6 413.1,233.2 417.1,234.7 420.9,232.8 421.2,232.8 421.2,257.0" fill="#32d232" /><polyline points="52.8,249.3 57.0,251.2 61.4,249.7 69.3,251.8 77.9,250.6 81.7,251.2 86.2,248.9 94.2,251.2 101.8,249.3 105.9,251.2 114.1,251.4 122.6,248.7 126.2,250.9 131.2,251.4 143.3,250.6 147.1,249.9 151.6,252.2 159.2,250.2 171.6,248.0 175.7,249.3 180.2,248.7 188.4,251.4 192.8,251.2 196.7,248.9 201.1,250.9 208.7,248.7 212.9,249.9 220.8,249.7 225.2,251.2 233.5,250.2 241.7,248.9 245.5,248.7 249.3,250.6 257.3,250.9 261.4,251.4 265.9,249.3 274.1,250.9 277.9,250.9 282.4,249.3 290.0,248.9 295.0,248.7 298.2,248.4 302.6,250.6 307.1,250.6 310.9,248.4 314.7,250.6 318.9,251.2 322.9,248.4 326.7,250.6 330.8,251.2 335.4,248.0 339.4,250.9 343.2,251.4 347.7,248.4 352.1,250.2 355.9,251.2 360.4,249.3 364.2,249.9 368.6,248.7 372.4,248.9 376.9,251.2 380.7,250.9 385.1,249.7 388.9,249.3 392.8,248.4 396.6,248.4 400.6,250.9 404.4,251.4 409.3,247.6 413.1,248.7 420.9,248.7" fill="none" stroke="#b8581c" stroke-width="0.9" stroke-linejoin="round"/><line x1="53.0" y1="256.70" x2="421.2" y2="256.70" stroke="#b9b41e" stroke-width="1.0"/><line x1="187.5" y1="281.00" x2="199.0" y2="281.00" stroke="#8e8a1c" stroke-width="0.9"/><text x="201.0" y="283.0" font-size="5.6" text-anchor="start" fill="#f2f2f2" font-weight="normal" >Co-Stop %</text><line x1="237.5" y1="281.00" x2="249.0" y2="281.00" stroke="#b8481c" stroke-width="0.9"/><text x="251.0" y="283.0" font-size="5.6" text-anchor="start" fill="#f2f2f2" font-weight="normal" >Ready-Time %</text>
<line x1="503.4" y1="200.50" x2="977.6" y2="200.50" stroke="#2c2c2c" stroke-width="0.6"/><line x1="503.4" y1="214.56" x2="977.6" y2="214.56" stroke="#2c2c2c" stroke-width="0.6"/><line x1="503.4" y1="228.62" x2="977.6" y2="228.62" stroke="#2c2c2c" stroke-width="0.6"/><line x1="503.4" y1="242.68" x2="977.6" y2="242.68" stroke="#2c2c2c" stroke-width="0.6"/><line x1="503.4" y1="256.74" x2="977.6" y2="256.74" stroke="#2c2c2c" stroke-width="0.6"/><line x1="503.4" y1="270.80" x2="977.6" y2="270.80" stroke="#2c2c2c" stroke-width="0.6"/><line x1="561.00" y1="200.5" x2="561.00" y2="270.8" stroke="#2c2c2c" stroke-width="0.6"/><line x1="640.00" y1="200.5" x2="640.00" y2="270.8" stroke="#2c2c2c" stroke-width="0.6"/><line x1="719.00" y1="200.5" x2="719.00" y2="270.8" stroke="#2c2c2c" stroke-width="0.6"/><line x1="798.00" y1="200.5" x2="798.00" y2="270.8" stroke="#2c2c2c" stroke-width="0.6"/><line x1="877.00" y1="200.5" x2="877.00" y2="270.8" stroke="#2c2c2c" stroke-width="0.6"/><line x1="956.00" y1="200.5" x2="956.00" y2="270.8" stroke="#2c2c2c" stroke-width="0.6"/><line x1="503.4" y1="200.50" x2="977.6" y2="200.50" stroke="#403836" stroke-width="0.7"/><line x1="503.40" y1="200.5" x2="503.40" y2="270.8" stroke="#555555" stroke-width="0.7"/><line x1="503.4" y1="270.80" x2="977.6" y2="270.80" stroke="#555555" stroke-width="0.7"/><line x1="977.60" y1="200.5" x2="977.60" y2="270.8" stroke="#9a2218" stroke-width="1.0"/><text x="496.6" y="202.5" font-size="5.6" text-anchor="end" fill="#f2f2f2" font-weight="normal" >200%</text><line x1="499.9" y1="200.50" x2="503.4" y2="200.50" stroke="#555555" stroke-width="0.6"/><text x="496.6" y="216.6" font-size="5.6" text-anchor="end" fill="#f2f2f2" font-weight="normal" >160%</text><line x1="499.9" y1="214.56" x2="503.4" y2="214.56" stroke="#555555" stroke-width="0.6"/><text x="496.6" y="230.6" font-size="5.6" text-anchor="end" fill="#f2f2f2" font-weight="normal" >120%</text><line x1="499.9" y1="228.62" x2="503.4" y2="228.62" stroke="#555555" stroke-width="0.6"/><text x="496.6" y="244.7" font-size="5.6" text-anchor="end" fill="#f2f2f2" font-weight="normal" >80%</text><line x1="499.9" y1="242.68" x2="503.4" y2="242.68" stroke="#555555" stroke-width="0.6"/><text x="496.6" y="258.7" font-size="5.6" text-anchor="end" fill="#f2f2f2" font-weight="normal" >40%</text><line x1="499.9" y1="256.74" x2="503.4" y2="256.74" stroke="#555555" stroke-width="0.6"/><text x="496.6" y="272.8" font-size="5.6" text-anchor="end" fill="#f2f2f2" font-weight="normal" >0%</text><line x1="499.9" y1="270.80" x2="503.4" y2="270.80" stroke="#555555" stroke-width="0.6"/><text x="561.0" y="278.4" font-size="5.6" text-anchor="middle" fill="#f2f2f2" font-weight="normal" >1:25:00 PM</text><text x="640.0" y="278.4" font-size="5.6" text-anchor="middle" fill="#f2f2f2" font-weight="normal" >1:30:00 PM</text><text x="719.0" y="278.4" font-size="5.6" text-anchor="middle" fill="#f2f2f2" font-weight="normal" >1:35:00 PM</text><text x="798.0" y="278.4" font-size="5.6" text-anchor="middle" fill="#f2f2f2" font-weight="normal" >1:40:00 PM</text><text x="877.0" y="278.4" font-size="5.6" text-anchor="middle" fill="#f2f2f2" font-weight="normal" >1:45:00 PM</text><text x="956.0" y="278.4" font-size="5.6" text-anchor="middle" fill="#f2f2f2" font-weight="normal" >1:50:00 PM</text><polygon points="503.5,270.8 503.5,228.4 508.6,237.8 513.6,226.1 519.1,232.3 524.2,245.6 530.0,233.4 534.7,234.7 540.2,240.2 545.7,226.9 550.3,232.3 555.8,242.5 561.3,233.9 566.4,230.0 571.8,243.3 576.9,237.0 582.4,245.6 587.8,235.5 592.8,217.2 598.0,237.8 603.5,243.3 608.9,234.4 614.4,238.6 619.1,235.5 624.2,233.1 630.0,245.6 635.5,239.4 640.5,230.8 645.7,230.8 651.1,219.8 655.8,214.7 661.2,230.0 666.4,223.8 671.9,230.0 677.3,242.5 682.5,234.7 687.5,226.1 693.0,237.0 698.4,233.1 703.6,226.6 709.1,237.8 714.1,237.0 719.1,232.3 724.7,240.9 730.0,232.3 735.2,233.4 740.6,235.5 745.6,230.8 750.8,225.0 756.2,234.7 761.7,237.8 766.9,235.5 772.2,242.5 777.3,229.2 782.8,236.2 788.3,235.5 793.4,235.9 798.4,231.6 804.4,229.6 809.1,226.1 814.1,228.7 819.3,222.2 824.6,231.4 829.5,237.5 835.2,223.5 840.4,234.9 846.0,241.9 851.0,227.0 856.2,239.3 861.5,243.7 866.8,222.9 872.1,240.2 877.3,244.6 882.6,225.2 887.9,234.9 893.2,241.6 898.8,230.0 903.7,233.1 909.9,228.7 915.1,228.7 920.9,240.2 925.7,236.6 931.0,227.8 936.2,231.0 940.6,233.1 945.9,218.2 951.2,240.2 956.1,242.8 961.7,215.2 967.0,227.0 972.3,231.4 977.5,220.8 977.5,270.8" fill="#e6789c" /><polygon points="503.5,270.8 503.5,230.0 508.6,240.2 513.6,228.4 519.1,234.7 524.2,247.2 530.0,236.2 534.7,237.8 540.2,241.7 545.7,230.8 550.3,234.7 555.8,244.1 561.3,236.2 566.4,233.1 571.8,244.8 576.9,239.4 582.4,247.2 587.8,237.8 592.8,220.6 598.0,240.2 603.5,244.8 608.9,237.0 614.4,240.9 619.1,238.6 624.2,236.2 630.0,246.9 635.5,240.9 640.5,233.9 645.7,233.9 651.1,226.9 655.8,223.0 661.2,233.9 666.4,230.8 671.9,233.1 677.3,246.4 682.5,238.6 687.5,230.0 693.0,240.2 698.4,237.8 703.6,232.3 709.1,241.7 714.1,241.7 719.1,237.0 724.7,244.1 730.0,236.2 735.2,237.0 740.6,239.4 745.6,235.5 750.8,230.0 756.2,238.6 761.7,240.9 766.9,239.4 772.2,245.6 777.3,233.1 782.8,240.2 788.3,239.7 793.4,239.4 798.4,235.5 804.4,233.1 809.1,230.5 814.1,232.2 819.3,226.1 824.6,234.9 829.5,239.3 835.2,227.8 840.4,238.4 846.0,242.8 851.0,231.4 856.2,241.9 861.5,246.3 866.8,227.0 872.1,242.8 877.3,246.3 882.6,229.6 887.9,238.4 893.2,242.8 898.8,234.9 903.7,235.8 909.9,234.0 915.1,233.5 920.9,241.9 925.7,239.8 931.0,232.2 936.2,234.9 940.6,236.6 945.9,223.5 951.2,242.8 956.1,244.6 961.7,220.8 967.0,231.4 972.3,234.9 977.5,225.2 977.5,270.8" fill="#a34f1e" /><polygon points="503.5,270.8 503.5,241.2 508.6,249.1 513.6,247.0 519.1,246.4 524.2,253.0 530.0,251.4 534.7,249.8 540.2,249.1 545.7,246.4 550.3,246.7 555.8,251.4 561.3,253.0 566.4,247.5 571.8,253.0 576.9,254.5 582.4,254.5 587.8,246.7 592.8,236.6 598.0,249.8 603.5,253.3 608.9,252.7 614.4,251.4 619.1,249.1 624.2,251.4 630.0,254.8 635.5,252.2 640.5,248.3 645.7,242.0 651.1,239.7 655.8,237.7 661.2,241.2 666.4,244.4 671.9,247.0 677.3,254.5 682.5,251.4 687.5,249.1 693.0,250.6 698.4,249.1 703.6,246.7 709.1,249.8 714.1,252.2 719.1,251.4 724.7,252.2 730.0,249.8 735.2,251.4 740.6,249.8 745.6,248.3 750.8,246.7 756.2,250.6 761.7,251.4 766.9,252.2 772.2,254.5 777.3,246.7 782.8,251.4 788.3,251.4 793.4,251.1 798.4,249.8 804.4,242.4 809.1,241.9 814.1,242.4 819.3,240.7 824.6,248.1 829.5,248.1 835.2,244.6 840.4,249.8 846.0,252.5 851.0,247.5 856.2,251.6 861.5,255.6 866.8,245.1 872.1,251.6 877.3,254.6 882.6,245.4 887.9,249.8 893.2,252.8 898.8,248.6 903.7,247.2 909.9,245.4 915.1,248.1 920.9,251.6 925.7,251.1 931.0,247.2 936.2,245.4 940.6,247.2 945.9,241.0 951.2,251.6 956.1,252.8 961.7,239.3 967.0,241.0 972.3,241.6 977.5,239.8 977.5,270.8" fill="#6f97dc" /><polygon points="503.5,270.8 503.5,241.7 508.6,249.5 513.6,247.5 519.1,246.9 524.2,253.4 530.0,251.9 534.7,250.3 540.2,249.5 545.7,246.9 550.3,247.2 555.8,251.9 561.3,253.4 566.4,248.0 571.8,253.4 576.9,255.0 582.4,255.0 587.8,247.2 592.8,237.0 598.0,250.3 603.5,253.8 608.9,253.1 614.4,251.9 619.1,249.5 624.2,251.9 630.0,255.3 635.5,252.7 640.5,248.8 645.7,242.5 651.1,240.2 655.8,238.1 661.2,241.7 666.4,244.8 671.9,247.5 677.3,255.0 682.5,251.9 687.5,249.5 693.0,251.1 698.4,249.5 703.6,247.2 709.1,250.3 714.1,252.7 719.1,251.9 724.7,252.7 730.0,250.3 735.2,251.9 740.6,250.3 745.6,248.8 750.8,247.2 756.2,251.1 761.7,251.9 766.9,252.7 772.2,255.0 777.3,247.2 782.8,251.9 788.3,251.9 793.4,251.6 798.4,250.3 804.4,242.8 809.1,242.3 814.1,242.8 819.3,241.0 824.6,248.9 829.5,248.9 835.2,245.4 840.4,250.7 846.0,253.3 851.0,248.1 856.2,252.5 861.5,256.0 866.8,245.4 872.1,252.5 877.3,255.1 882.6,246.3 887.9,251.6 893.2,256.0 898.8,251.6 903.7,249.8 909.9,248.1 915.1,251.1 920.9,254.2 925.7,253.9 931.0,249.8 936.2,248.1 940.6,249.8 945.9,244.6 951.2,255.1 956.1,256.0 961.7,243.3 967.0,244.0 972.3,243.7 977.5,242.8 977.5,270.8" fill="#e2994f" /><polygon points="503.5,270.8 503.5,249.9 508.6,257.3 513.6,253.3 519.1,255.2 524.2,258.8 530.0,257.9 534.7,256.8 540.2,255.3 545.7,256.1 550.3,254.8 555.8,258.6 561.3,258.6 566.4,253.7 571.8,259.0 576.9,259.7 582.4,260.0 587.8,256.0 592.8,249.7 598.0,257.9 603.5,259.2 608.9,258.6 614.4,257.5 619.1,255.1 624.2,258.3 630.0,260.1 635.5,258.4 640.5,255.2 645.7,247.5 651.1,246.2 655.8,244.8 661.2,247.1 666.4,252.1 671.9,252.5 677.3,259.3 682.5,257.7 687.5,256.1 693.0,257.1 698.4,254.7 703.6,254.5 709.1,256.8 714.1,258.1 719.1,257.0 724.7,257.2 730.0,257.6 735.2,257.5 740.6,253.7 745.6,255.2 750.8,253.6 756.2,256.8 761.7,257.7 766.9,258.1 772.2,259.5 777.3,254.1 782.8,257.5 788.3,257.7 793.4,257.6 798.4,256.5 804.4,248.1 809.1,247.4 814.1,247.9 819.3,246.5 824.6,255.7 829.5,254.3 835.2,253.2 840.4,257.0 846.0,258.7 851.0,254.4 856.2,257.1 861.5,259.8 866.8,254.1 872.1,258.7 877.3,259.9 882.6,253.6 887.9,257.9 893.2,260.3 898.8,257.9 903.7,256.6 909.9,254.8 915.1,257.1 920.9,259.5 925.7,258.9 931.0,254.7 936.2,253.4 940.6,254.7 945.9,253.5 951.2,259.9 956.1,260.3 961.7,248.8 967.0,248.5 972.3,248.3 977.5,247.6 977.5,270.8" fill="#d68e48" /><polygon points="503.5,270.8 503.5,256.6 508.6,263.6 513.6,258.1 519.1,262.0 524.2,263.1 530.0,262.8 534.7,262.0 540.2,260.0 545.7,263.6 550.3,260.9 555.8,264.1 561.3,262.8 566.4,258.4 571.8,263.6 576.9,263.6 582.4,264.1 587.8,263.1 592.8,260.0 598.0,264.1 603.5,263.6 608.9,263.1 614.4,262.0 619.1,259.7 624.2,263.6 630.0,264.1 635.5,263.1 640.5,260.5 645.7,251.6 651.1,251.1 655.8,250.3 661.2,251.6 666.4,258.1 671.9,256.6 677.3,262.8 682.5,262.5 687.5,261.6 693.0,262.0 698.4,258.9 703.6,260.5 709.1,262.0 714.1,262.5 719.1,261.2 724.7,260.9 730.0,263.6 735.2,262.0 740.6,256.6 745.6,260.5 750.8,258.9 756.2,261.6 761.7,262.5 766.9,262.5 772.2,263.1 777.3,259.7 782.8,262.0 788.3,262.5 793.4,262.5 798.4,261.6 804.4,252.5 809.1,251.6 814.1,252.1 819.3,251.1 824.6,261.2 829.5,258.6 835.2,259.5 840.4,262.1 846.0,263.0 851.0,259.5 856.2,260.9 861.5,263.0 866.8,261.2 872.1,263.9 877.3,263.9 882.6,259.5 887.9,263.0 893.2,263.9 898.8,263.0 903.7,262.1 909.9,260.4 915.1,262.1 920.9,263.9 925.7,263.0 931.0,258.6 936.2,257.7 940.6,258.6 945.9,260.9 951.2,263.9 956.1,263.9 961.7,253.3 967.0,252.1 972.3,252.1 977.5,251.6 977.5,270.8" fill="#f0926e" /><polygon points="503.5,270.8 503.5,257.9 508.6,265.3 513.6,260.4 519.1,264.4 524.2,265.5 530.0,265.1 534.7,264.9 540.2,262.8 545.7,265.5 550.3,263.4 555.8,265.9 561.3,265.1 566.4,261.2 571.8,265.7 576.9,265.7 582.4,266.2 587.8,265.2 592.8,262.1 598.0,266.2 603.5,265.9 608.9,265.5 614.4,264.4 619.1,262.2 624.2,265.7 630.0,266.2 635.5,265.7 640.5,263.8 645.7,254.2 651.1,253.6 655.8,253.2 661.2,254.0 666.4,261.8 671.9,259.9 677.3,265.3 682.5,265.2 687.5,264.7 693.0,264.7 698.4,261.6 703.6,263.8 709.1,264.7 714.1,265.2 719.1,264.2 724.7,263.1 730.0,265.7 735.2,264.5 740.6,260.1 745.6,263.9 750.8,261.6 756.2,264.2 761.7,265.2 766.9,265.2 772.2,265.2 777.3,262.0 782.8,264.9 788.3,265.4 793.4,265.4 798.4,264.7 804.4,255.0 809.1,254.1 814.1,254.4 819.3,253.4 824.6,263.8 829.5,260.9 835.2,262.4 840.4,264.9 846.0,265.4 851.0,262.4 856.2,263.4 861.5,265.4 866.8,264.5 872.1,265.8 877.3,265.8 882.6,261.8 887.9,265.4 893.2,265.8 898.8,264.8 903.7,264.9 909.9,262.6 915.1,264.9 920.9,266.0 925.7,265.4 931.0,261.6 936.2,260.7 940.6,262.9 945.9,263.6 951.2,265.8 956.1,265.8 961.7,255.6 967.0,254.4 972.3,254.4 977.5,254.1 977.5,270.8" fill="#f2a890" /><polygon points="503.5,270.8 503.5,261.2 508.6,269.1 513.6,264.7 519.1,268.8 524.2,269.8 530.0,269.4 534.7,269.8 540.2,267.5 545.7,269.4 550.3,267.8 555.8,269.8 561.3,269.4 566.4,265.9 571.8,269.8 576.9,269.8 582.4,270.3 587.8,269.4 592.8,266.2 598.0,270.3 603.5,270.3 608.9,269.8 614.4,268.8 619.1,266.7 624.2,269.8 630.0,270.3 635.5,270.3 640.5,269.1 645.7,258.9 651.1,258.1 655.8,258.1 661.2,258.4 666.4,267.5 671.9,265.2 677.3,269.8 682.5,269.8 687.5,269.8 693.0,269.4 698.4,266.2 703.6,269.1 709.1,269.4 714.1,269.8 719.1,269.1 724.7,267.2 730.0,269.8 735.2,269.1 740.6,265.6 745.6,269.4 750.8,266.2 756.2,268.8 761.7,269.8 766.9,269.8 772.2,269.4 777.3,266.2 782.8,269.8 788.3,270.3 793.4,270.3 798.4,269.8 804.4,259.5 809.1,258.6 814.1,258.6 819.3,257.7 824.6,268.3 829.5,265.1 835.2,267.4 840.4,269.7 846.0,269.7 851.0,267.4 856.2,267.9 861.5,269.7 866.8,269.7 872.1,269.7 877.3,269.7 882.6,266.2 887.9,269.7 893.2,269.7 898.8,268.6 903.7,269.7 909.9,266.9 915.1,269.7 920.9,270.0 925.7,269.7 931.0,266.5 936.2,265.6 940.6,269.2 945.9,268.3 951.2,269.7 956.1,269.7 961.7,259.8 967.0,258.6 972.3,258.6 977.5,258.6 977.5,270.8" fill="#8a8c14" />
<line x1="45.4" y1="357.80" x2="257.2" y2="357.80" stroke="#2c2c2c" stroke-width="0.6"/><line x1="45.4" y1="371.85" x2="257.2" y2="371.85" stroke="#2c2c2c" stroke-width="0.6"/><line x1="45.4" y1="385.90" x2="257.2" y2="385.90" stroke="#2c2c2c" stroke-width="0.6"/><line x1="45.4" y1="399.95" x2="257.2" y2="399.95" stroke="#2c2c2c" stroke-width="0.6"/><line x1="45.4" y1="414.00" x2="257.2" y2="414.00" stroke="#2c2c2c" stroke-width="0.6"/><line x1="106.80" y1="357.8" x2="106.80" y2="414.0" stroke="#2c2c2c" stroke-width="0.6"/><line x1="177.30" y1="357.8" x2="177.30" y2="414.0" stroke="#2c2c2c" stroke-width="0.6"/><line x1="247.80" y1="357.8" x2="247.80" y2="414.0" stroke="#2c2c2c" stroke-width="0.6"/><line x1="45.4" y1="357.80" x2="257.2" y2="357.80" stroke="#403836" stroke-width="0.7"/><line x1="45.40" y1="357.8" x2="45.40" y2="414.0" stroke="#555555" stroke-width="0.7"/><line x1="45.4" y1="414.00" x2="257.2" y2="414.00" stroke="#555555" stroke-width="0.7"/><line x1="257.20" y1="357.8" x2="257.20" y2="414.0" stroke="#9a2218" stroke-width="1.0"/><text x="39.9" y="359.8" font-size="5.6" text-anchor="end" fill="#f2f2f2" font-weight="normal" >200,000</text><line x1="41.9" y1="357.80" x2="45.4" y2="357.80" stroke="#555555" stroke-width="0.6"/><text x="39.9" y="373.9" font-size="5.6" text-anchor="end" fill="#f2f2f2" font-weight="normal" >150,000</text><line x1="41.9" y1="371.85" x2="45.4" y2="371.85" stroke="#555555" stroke-width="0.6"/><text x="39.9" y="387.9" font-size="5.6" text-anchor="end" fill="#f2f2f2" font-weight="normal" >100,000</text><line x1="41.9" y1="385.90" x2="45.4" y2="385.90" stroke="#555555" stroke-width="0.6"/><text x="39.9" y="401.9" font-size="5.6" text-anchor="end" fill="#f2f2f2" font-weight="normal" >50,000</text><line x1="41.9" y1="399.95" x2="45.4" y2="399.95" stroke="#555555" stroke-width="0.6"/><text x="39.9" y="416.0" font-size="5.6" text-anchor="end" fill="#f2f2f2" font-weight="normal" >0</text><line x1="41.9" y1="414.00" x2="45.4" y2="414.00" stroke="#555555" stroke-width="0.6"/><text x="106.8" y="421.4" font-size="5.6" text-anchor="middle" fill="#f2f2f2" font-weight="normal" >1:30:00 PM</text><text x="177.3" y="421.4" font-size="5.6" text-anchor="middle" fill="#f2f2f2" font-weight="normal" >1:40:00 PM</text><text x="247.8" y="421.4" font-size="5.6" text-anchor="middle" fill="#f2f2f2" font-weight="normal" >1:50:00 PM</text><polygon points="45.4,414.0 45.4,370.0 48.9,370.3 52.5,370.1 56.0,370.0 59.5,370.2 63.0,370.2 66.6,369.8 70.1,369.7 73.6,370.0 77.2,369.9 80.7,369.8 84.2,370.0 87.8,370.3 91.3,370.2 94.8,370.0 98.3,370.1 101.9,370.1 105.4,369.8 108.9,369.7 112.5,370.0 116.0,370.0 119.5,369.8 123.1,370.1 126.6,370.3 130.1,370.2 133.7,369.9 137.2,370.1 140.7,370.1 144.2,369.8 147.8,369.7 151.3,370.0 154.8,370.1 158.4,369.9 161.9,370.1 165.4,370.3 168.9,370.2 172.5,369.9 176.0,370.0 179.5,370.0 183.1,369.8 186.6,369.7 190.1,370.0 193.7,370.1 197.2,369.8 200.7,369.6 204.2,369.3 207.8,368.8 211.3,368.5 214.8,368.7 218.4,368.7 221.9,368.5 225.4,368.9 229.0,369.7 232.5,370.2 236.0,370.0 239.5,370.1 243.1,370.3 246.6,370.1 250.1,369.8 253.7,369.8 257.2,370.0 257.2,414.0" fill="#fda47a" /><polygon points="45.4,414.0 45.4,408.1 48.9,408.0 52.5,407.6 56.0,407.7 59.5,407.8 63.0,407.6 66.6,407.5 70.1,407.8 73.6,408.0 77.2,407.9 80.7,407.8 84.2,408.1 87.8,407.9 91.3,407.6 94.8,407.6 98.3,407.8 101.9,407.7 105.4,407.6 108.9,407.9 112.5,408.1 116.0,407.9 119.5,407.8 123.1,408.0 126.6,407.9 130.1,407.5 133.7,407.6 137.2,407.8 140.7,407.7 144.2,407.6 147.8,407.9 151.3,408.1 154.8,407.9 158.4,407.8 161.9,407.9 165.4,407.9 168.9,407.5 172.5,407.5 176.0,407.8 179.5,407.8 183.1,407.7 186.6,407.9 190.1,408.1 193.7,407.9 197.2,407.6 200.7,407.4 204.2,406.8 207.8,406.1 211.3,406.2 214.8,406.7 218.4,406.6 221.9,406.4 225.4,407.1 229.0,407.9 232.5,407.9 236.0,407.6 239.5,407.8 243.1,407.8 246.6,407.5 250.1,407.5 253.7,407.9 257.2,408.0 257.2,414.0" fill="#7a66ea" /><line x1="45.4" y1="375.20" x2="257.2" y2="375.20" stroke="#c9b6ae" stroke-width="1.3"/><rect x="27.6" y="436.4" width="11.5" height="5.2" fill="#7a66ea"/><text x="42.0" y="441.0" font-size="5.6" text-anchor="start" fill="#f2f2f2" font-weight="normal" >Active</text><rect x="65.8" y="436.4" width="11.5" height="5.2" fill="#fda47a"/><text x="79.5" y="441.0" font-size="5.6" text-anchor="start" fill="#f2f2f2" font-weight="normal" >Consumed</text><rect x="116.0" y="436.4" width="11.5" height="5.2" fill="#f5e08e"/><text x="130.0" y="441.0" font-size="5.6" text-anchor="start" fill="#f2f2f2" font-weight="normal" >Overhead</text><rect x="163.3" y="436.4" width="11.5" height="5.2" fill="#0a0a0a" stroke="#777" stroke-width="0.6"/><text x="177.3" y="441.0" font-size="5.6" text-anchor="start" fill="#f2f2f2" font-weight="normal" >Available</text><line x1="209.0" y1="439.00" x2="220.0" y2="439.00" stroke="#8a8a8a" stroke-width="0.8"/><text x="222.5" y="441.0" font-size="5.6" text-anchor="start" fill="#f2f2f2" font-weight="normal" >Granted</text>
<line x1="283.8" y1="357.50" x2="436.6" y2="357.50" stroke="#2c2c2c" stroke-width="0.6"/><line x1="283.8" y1="366.92" x2="436.6" y2="366.92" stroke="#2c2c2c" stroke-width="0.6"/><line x1="283.8" y1="376.33" x2="436.6" y2="376.33" stroke="#2c2c2c" stroke-width="0.6"/><line x1="283.8" y1="385.75" x2="436.6" y2="385.75" stroke="#2c2c2c" stroke-width="0.6"/><line x1="283.8" y1="395.17" x2="436.6" y2="395.17" stroke="#2c2c2c" stroke-width="0.6"/><line x1="283.8" y1="404.58" x2="436.6" y2="404.58" stroke="#2c2c2c" stroke-width="0.6"/><line x1="283.8" y1="414.00" x2="436.6" y2="414.00" stroke="#2c2c2c" stroke-width="0.6"/><line x1="328.60" y1="357.5" x2="328.60" y2="414.0" stroke="#2c2c2c" stroke-width="0.6"/><line x1="379.00" y1="357.5" x2="379.00" y2="414.0" stroke="#2c2c2c" stroke-width="0.6"/><line x1="430.00" y1="357.5" x2="430.00" y2="414.0" stroke="#2c2c2c" stroke-width="0.6"/><line x1="283.8" y1="357.50" x2="436.6" y2="357.50" stroke="#403836" stroke-width="0.7"/><line x1="283.80" y1="357.5" x2="283.80" y2="414.0" stroke="#555555" stroke-width="0.7"/><line x1="283.8" y1="414.00" x2="436.6" y2="414.00" stroke="#555555" stroke-width="0.7"/><line x1="436.60" y1="357.5" x2="436.60" y2="414.0" stroke="#9a2218" stroke-width="1.0"/><text x="281.0" y="359.5" font-size="5.6" text-anchor="end" fill="#f2f2f2" font-weight="normal" >1</text><text x="281.0" y="368.9" font-size="5.6" text-anchor="end" fill="#f2f2f2" font-weight="normal" >1</text><text x="281.0" y="378.3" font-size="5.6" text-anchor="end" fill="#f2f2f2" font-weight="normal" >1</text><text x="281.0" y="387.8" font-size="5.6" text-anchor="end" fill="#f2f2f2" font-weight="normal" >1</text><text x="281.0" y="397.2" font-size="5.6" text-anchor="end" fill="#f2f2f2" font-weight="normal" >0</text><text x="281.0" y="406.6" font-size="5.6" text-anchor="end" fill="#f2f2f2" font-weight="normal" >0</text><text x="281.0" y="416.0" font-size="5.6" text-anchor="end" fill="#f2f2f2" font-weight="normal" >0</text><text x="328.6" y="421.4" font-size="5.6" text-anchor="middle" fill="#f2f2f2" font-weight="normal" >1:30:00 PM</text><text x="379.0" y="421.4" font-size="5.6" text-anchor="middle" fill="#f2f2f2" font-weight="normal" >1:40:00 PM</text><text x="430.0" y="421.4" font-size="5.6" text-anchor="middle" fill="#f2f2f2" font-weight="normal" >1:50:00 PM</text><line x1="283.8" y1="413.80" x2="436.6" y2="413.80" stroke="#8a4a24" stroke-width="0.8"/><rect x="308.0" y="436.4" width="11.8" height="5.2" fill="#ffa21e"/><text x="322.3" y="441.0" font-size="5.6" text-anchor="start" fill="#f2f2f2" font-weight="normal" >Swap In</text><rect x="351.0" y="436.4" width="11.8" height="5.2" fill="#ff5a1c"/><text x="365.3" y="441.0" font-size="5.6" text-anchor="start" fill="#f2f2f2" font-weight="normal" >Swap Out</text>
<line x1="561.00" y1="357.7" x2="561.00" y2="363.4" stroke="#2c2c2c" stroke-width="0.6"/><line x1="640.00" y1="357.7" x2="640.00" y2="363.4" stroke="#2c2c2c" stroke-width="0.6"/><line x1="719.00" y1="357.7" x2="719.00" y2="363.4" stroke="#2c2c2c" stroke-width="0.6"/><line x1="798.00" y1="357.7" x2="798.00" y2="363.4" stroke="#2c2c2c" stroke-width="0.6"/><line x1="877.00" y1="357.7" x2="877.00" y2="363.4" stroke="#2c2c2c" stroke-width="0.6"/><line x1="956.00" y1="357.7" x2="956.00" y2="363.4" stroke="#2c2c2c" stroke-width="0.6"/><line x1="503.2" y1="363.40" x2="977.6" y2="363.40" stroke="#2c2c2c" stroke-width="0.6"/><line x1="503.2" y1="357.70" x2="977.6" y2="357.70" stroke="#403836" stroke-width="0.7"/><line x1="503.20" y1="357.7" x2="503.20" y2="428.8" stroke="#555555" stroke-width="0.7"/><line x1="503.2" y1="428.80" x2="977.6" y2="428.80" stroke="#555555" stroke-width="0.7"/><line x1="977.60" y1="357.7" x2="977.60" y2="428.8" stroke="#9a2218" stroke-width="1.0"/><text x="495.8" y="359.7" font-size="5.6" text-anchor="end" fill="#f2f2f2" font-weight="normal" >160,000</text><line x1="499.7" y1="357.70" x2="503.2" y2="357.70" stroke="#555555" stroke-width="0.6"/><text x="495.8" y="368.6" font-size="5.6" text-anchor="end" fill="#f2f2f2" font-weight="normal" >140,000</text><line x1="499.7" y1="366.59" x2="503.2" y2="366.59" stroke="#555555" stroke-width="0.6"/><text x="495.8" y="377.5" font-size="5.6" text-anchor="end" fill="#f2f2f2" font-weight="normal" >120,000</text><line x1="499.7" y1="375.48" x2="503.2" y2="375.48" stroke="#555555" stroke-width="0.6"/><text x="495.8" y="386.4" font-size="5.6" text-anchor="end" fill="#f2f2f2" font-weight="normal" >100,000</text><line x1="499.7" y1="384.36" x2="503.2" y2="384.36" stroke="#555555" stroke-width="0.6"/><text x="495.8" y="395.2" font-size="5.6" text-anchor="end" fill="#f2f2f2" font-weight="normal" >80,000</text><line x1="499.7" y1="393.25" x2="503.2" y2="393.25" stroke="#555555" stroke-width="0.6"/><text x="495.8" y="404.1" font-size="5.6" text-anchor="end" fill="#f2f2f2" font-weight="normal" >60,000</text><line x1="499.7" y1="402.14" x2="503.2" y2="402.14" stroke="#555555" stroke-width="0.6"/><text x="495.8" y="413.0" font-size="5.6" text-anchor="end" fill="#f2f2f2" font-weight="normal" >40,000</text><line x1="499.7" y1="411.02" x2="503.2" y2="411.02" stroke="#555555" stroke-width="0.6"/><text x="495.8" y="421.9" font-size="5.6" text-anchor="end" fill="#f2f2f2" font-weight="normal" >20,000</text><line x1="499.7" y1="419.91" x2="503.2" y2="419.91" stroke="#555555" stroke-width="0.6"/><text x="495.8" y="430.8" font-size="5.6" text-anchor="end" fill="#f2f2f2" font-weight="normal" >0</text><line x1="499.7" y1="428.80" x2="503.2" y2="428.80" stroke="#555555" stroke-width="0.6"/><text x="561.0" y="436.0" font-size="5.6" text-anchor="middle" fill="#f2f2f2" font-weight="normal" >1:25:00 PM</text><text x="640.0" y="436.0" font-size="5.6" text-anchor="middle" fill="#f2f2f2" font-weight="normal" >1:30:00 PM</text><text x="719.0" y="436.0" font-size="5.6" text-anchor="middle" fill="#f2f2f2" font-weight="normal" >1:35:00 PM</text><text x="798.0" y="436.0" font-size="5.6" text-anchor="middle" fill="#f2f2f2" font-weight="normal" >1:40:00 PM</text><text x="877.0" y="436.0" font-size="5.6" text-anchor="middle" fill="#f2f2f2" font-weight="normal" >1:45:00 PM</text><text x="956.0" y="436.0" font-size="5.6" text-anchor="middle" fill="#f2f2f2" font-weight="normal" >1:50:00 PM</text><rect x="503.2" y="368.0" width="474.4" height="9.35" fill="#e2709a"/><rect x="503.2" y="377.2" width="474.4" height="3.95" fill="#a34a18"/><rect x="503.2" y="381.0" width="474.4" height="3.65" fill="#6c9ce8"/><rect x="503.2" y="384.5" width="474.4" height="7.95" fill="#f8623e"/><rect x="503.2" y="392.3" width="474.4" height="1.85" fill="#e4e4c8"/><rect x="503.2" y="394.0" width="474.4" height="6.75" fill="#db8e48"/><rect x="503.2" y="400.6" width="474.4" height="1.55" fill="#5e6412"/><rect x="503.2" y="402.0" width="474.4" height="15.15" fill="#e99c7c"/><rect x="503.2" y="417.0" width="474.4" height="1.15" fill="#c2226e"/><rect x="503.2" y="418.0" width="474.4" height="1.85" fill="#d6b048"/><rect x="503.2" y="419.7" width="474.4" height="3.25" fill="#8a8410"/><rect x="503.2" y="422.8" width="474.4" height="3.35" fill="#e2904e"/><rect x="503.2" y="426.0" width="474.4" height="2.95" fill="#72b8c8"/><line x1="977.60" y1="357.7" x2="977.60" y2="428.8" stroke="#9a2218" stroke-width="1.0"/>
<line x1="42.3" y1="507.30" x2="218.4" y2="507.30" stroke="#2c2c2c" stroke-width="0.6"/><line x1="42.3" y1="520.35" x2="218.4" y2="520.35" stroke="#2c2c2c" stroke-width="0.6"/><line x1="42.3" y1="533.40" x2="218.4" y2="533.40" stroke="#2c2c2c" stroke-width="0.6"/><line x1="42.3" y1="546.45" x2="218.4" y2="546.45" stroke="#2c2c2c" stroke-width="0.6"/><line x1="42.3" y1="559.50" x2="218.4" y2="559.50" stroke="#2c2c2c" stroke-width="0.6"/><line x1="94.00" y1="507.3" x2="94.00" y2="559.5" stroke="#2c2c2c" stroke-width="0.6"/><line x1="152.30" y1="507.3" x2="152.30" y2="559.5" stroke="#2c2c2c" stroke-width="0.6"/><line x1="210.60" y1="507.3" x2="210.60" y2="559.5" stroke="#2c2c2c" stroke-width="0.6"/><line x1="42.3" y1="507.30" x2="218.4" y2="507.30" stroke="#403836" stroke-width="0.7"/><line x1="42.30" y1="507.3" x2="42.30" y2="559.5" stroke="#555555" stroke-width="0.7"/><line x1="42.3" y1="559.50" x2="218.4" y2="559.50" stroke="#555555" stroke-width="0.7"/><line x1="218.40" y1="507.3" x2="218.40" y2="559.5" stroke="#9a2218" stroke-width="1.0"/><text x="39.3" y="509.3" font-size="5.6" text-anchor="end" fill="#f2f2f2" font-weight="normal" >8</text><text x="39.3" y="522.4" font-size="5.6" text-anchor="end" fill="#f2f2f2" font-weight="normal" >6</text><text x="39.3" y="535.4" font-size="5.6" text-anchor="end" fill="#f2f2f2" font-weight="normal" >4</text><text x="39.3" y="548.5" font-size="5.6" text-anchor="end" fill="#f2f2f2" font-weight="normal" >2</text><text x="39.3" y="561.5" font-size="5.6" text-anchor="end" fill="#f2f2f2" font-weight="normal" >0</text><text x="94.0" y="566.6" font-size="5.6" text-anchor="middle" fill="#f2f2f2" font-weight="normal" >1:30:00 PM</text><text x="152.3" y="566.6" font-size="5.6" text-anchor="middle" fill="#f2f2f2" font-weight="normal" >1:40:00 PM</text><text x="210.6" y="566.6" font-size="5.6" text-anchor="middle" fill="#f2f2f2" font-weight="normal" >1:50:00 PM</text><polyline points="42.3,553.6 43.6,559.5 43.9,559.5 45.4,553.0 51.9,553.0 53.4,559.5 56.0,559.5 57.5,553.0 63.0,553.0 64.5,559.5 66.0,559.5 67.7,553.0 69.4,559.5 71.8,559.5 73.3,553.0 78.8,553.0 80.3,559.5 84.4,559.5 85.9,553.0 91.8,553.0 93.3,559.5 94.2,559.5 95.9,553.0 97.6,559.5 101.6,559.5 103.3,553.0 105.0,559.5 109.6,559.5 111.3,553.0 113.0,559.5 121.7,559.5 123.4,553.0 125.0,559.5 135.2,559.5 136.7,553.0 139.1,553.0 140.6,559.5 144.9,559.5 146.5,553.0 148.2,559.5 156.0,559.5 157.7,553.0 159.3,559.5 163.6,559.5 165.1,553.0 167.9,553.0 169.4,559.5 170.5,559.5 172.0,553.0 180.5,553.0 182.0,559.5 182.9,559.5 184.6,553.0 186.3,559.5 188.5,559.5 190.1,553.0 191.8,559.5 194.4,559.5 196.1,553.0 197.8,559.5 201.7,559.5 203.1,553.0 206.8,553.0 208.3,559.5 211.3,559.5 212.8,553.0 215.2,553.0 216.7,559.5" fill="none" stroke="#2a9c92" stroke-width="0.7" stroke-linejoin="round"/><polyline points="42.3,559.5 45.2,559.5 46.9,553.0 48.6,559.5 49.3,559.5 51.0,553.0 52.7,559.5 94.0,559.5 95.5,546.5 97.0,559.5 129.1,559.5 130.8,513.8 132.4,559.5 152.9,559.5 154.3,539.9 155.8,559.5 164.5,559.5 166.0,546.5 167.5,559.5 193.7,559.5 195.3,526.9 197.0,559.5 204.2,559.5 205.9,553.0 207.6,559.5 218.0,559.5" fill="none" stroke="#88c088" stroke-width="0.7" stroke-linejoin="round"/><rect x="72.8" y="583.4" width="11.6" height="5.2" fill="#98f098"/><text x="87.0" y="588.0" font-size="5.6" text-anchor="start" fill="#f2f2f2" font-weight="normal" >ms/Read</text><rect x="117.5" y="583.4" width="11.8" height="5.2" fill="#22b4b0"/><text x="132.0" y="588.0" font-size="5.6" text-anchor="start" fill="#f2f2f2" font-weight="normal" >ms/Write</text>
<line x1="246.8" y1="507.30" x2="421.3" y2="507.30" stroke="#2c2c2c" stroke-width="0.6"/><line x1="246.8" y1="520.35" x2="421.3" y2="520.35" stroke="#2c2c2c" stroke-width="0.6"/><line x1="246.8" y1="533.40" x2="421.3" y2="533.40" stroke="#2c2c2c" stroke-width="0.6"/><line x1="246.8" y1="546.45" x2="421.3" y2="546.45" stroke="#2c2c2c" stroke-width="0.6"/><line x1="246.8" y1="559.50" x2="421.3" y2="559.50" stroke="#2c2c2c" stroke-width="0.6"/><line x1="297.70" y1="507.3" x2="297.70" y2="559.5" stroke="#2c2c2c" stroke-width="0.6"/><line x1="355.60" y1="507.3" x2="355.60" y2="559.5" stroke="#2c2c2c" stroke-width="0.6"/><line x1="413.80" y1="507.3" x2="413.80" y2="559.5" stroke="#2c2c2c" stroke-width="0.6"/><line x1="246.8" y1="507.30" x2="421.3" y2="507.30" stroke="#403836" stroke-width="0.7"/><line x1="246.80" y1="507.3" x2="246.80" y2="559.5" stroke="#555555" stroke-width="0.7"/><line x1="246.8" y1="559.50" x2="421.3" y2="559.50" stroke="#555555" stroke-width="0.7"/><line x1="421.30" y1="507.3" x2="421.30" y2="559.5" stroke="#9a2218" stroke-width="1.0"/><text x="244.4" y="509.3" font-size="5.6" text-anchor="end" fill="#f2f2f2" font-weight="normal" >20</text><text x="244.4" y="522.4" font-size="5.6" text-anchor="end" fill="#f2f2f2" font-weight="normal" >15</text><text x="244.4" y="535.4" font-size="5.6" text-anchor="end" fill="#f2f2f2" font-weight="normal" >10</text><text x="244.4" y="548.5" font-size="5.6" text-anchor="end" fill="#f2f2f2" font-weight="normal" >5</text><text x="244.4" y="561.5" font-size="5.6" text-anchor="end" fill="#f2f2f2" font-weight="normal" >0</text><text x="297.7" y="566.6" font-size="5.6" text-anchor="middle" fill="#f2f2f2" font-weight="normal" >1:30:00 PM</text><text x="355.6" y="566.6" font-size="5.6" text-anchor="middle" fill="#f2f2f2" font-weight="normal" >1:40:00 PM</text><text x="413.8" y="566.6" font-size="5.6" text-anchor="middle" fill="#f2f2f2" font-weight="normal" >1:50:00 PM</text><polyline points="246.8,556.1 248.7,535.6 251.3,556.1 254.6,555.2 258.3,551.5 260.2,555.2 263.0,546.8 265.8,555.2 270.5,556.1 276.0,556.1 280.1,525.4 282.9,555.2 285.4,556.1 287.8,551.5 289.6,556.1 292.4,547.8 295.6,554.3 297.8,556.1 299.7,539.4 302.1,556.1 304.5,550.6 307.1,536.6 309.6,555.2 313.3,557.1 317.9,555.2 320.4,549.6 323.5,556.1 329.1,556.5 333.8,556.1 336.2,548.7 339.4,556.5 347.7,556.5 351.5,553.3 353.9,546.8 356.7,556.1 361.7,556.1 365.8,539.4 368.2,552.4 371.0,553.3 373.8,556.5 377.5,555.2 380.9,542.7 384.1,553.3 386.8,552.0 389.6,556.1 394.3,552.4 398.0,553.3 403.6,555.2 407.3,553.3 409.8,544.0 412.9,556.1 417.6,555.2 421.3,556.1" fill="none" stroke="#c8441a" stroke-width="0.75" stroke-linejoin="round"/><polyline points="246.8,558.0 248.7,548.7 251.3,558.0 256.5,557.1 258.3,550.6 260.2,557.6 263.0,553.3 265.8,557.6 276.0,558.4 277.9,553.3 280.1,558.0 282.9,554.3 285.4,558.4 287.8,554.3 290.0,558.0 293.7,556.1 296.5,557.6 299.3,511.4 301.7,557.1 304.9,546.8 307.7,556.1 310.5,558.0 317.9,558.0 320.7,553.3 324.5,558.4 333.8,558.4 336.2,555.2 339.4,558.4 349.6,558.0 353.9,551.5 356.7,558.4 358.9,556.1 361.7,558.4 365.8,553.3 369.2,558.0 371.0,552.4 373.8,558.4 378.5,557.6 381.3,552.4 384.1,558.0 386.8,509.5 389.6,558.0 394.3,556.1 399.9,558.0 407.3,558.4 410.1,555.2 412.9,558.4 421.3,558.0" fill="none" stroke="#e09a30" stroke-width="0.75" stroke-linejoin="round"/><text x="285.5" y="588.0" font-size="5.6" text-anchor="start" fill="#f2f2f2" font-weight="normal" >MB/sec:</text><rect x="314.3" y="583.4" width="11.8" height="5.2" fill="#ffa21e"/><text x="328.7" y="588.0" font-size="5.6" text-anchor="start" fill="#f2f2f2" font-weight="normal" >Read</text><rect x="350.0" y="583.4" width="11.8" height="5.2" fill="#ff5a1c"/><text x="364.3" y="588.0" font-size="5.6" text-anchor="start" fill="#f2f2f2" font-weight="normal" >Write</text>
<line x1="477.2" y1="507.30" x2="715.3" y2="507.30" stroke="#2c2c2c" stroke-width="0.6"/><line x1="477.2" y1="524.70" x2="715.3" y2="524.70" stroke="#2c2c2c" stroke-width="0.6"/><line x1="477.2" y1="542.10" x2="715.3" y2="542.10" stroke="#2c2c2c" stroke-width="0.6"/><line x1="477.2" y1="559.50" x2="715.3" y2="559.50" stroke="#2c2c2c" stroke-width="0.6"/><line x1="506.80" y1="507.3" x2="506.80" y2="559.5" stroke="#2c2c2c" stroke-width="0.6"/><line x1="546.35" y1="507.3" x2="546.35" y2="559.5" stroke="#2c2c2c" stroke-width="0.6"/><line x1="585.90" y1="507.3" x2="585.90" y2="559.5" stroke="#2c2c2c" stroke-width="0.6"/><line x1="625.45" y1="507.3" x2="625.45" y2="559.5" stroke="#2c2c2c" stroke-width="0.6"/><line x1="665.00" y1="507.3" x2="665.00" y2="559.5" stroke="#2c2c2c" stroke-width="0.6"/><line x1="704.55" y1="507.3" x2="704.55" y2="559.5" stroke="#2c2c2c" stroke-width="0.6"/><line x1="477.2" y1="507.30" x2="715.3" y2="507.30" stroke="#403836" stroke-width="0.7"/><line x1="477.20" y1="507.3" x2="477.20" y2="559.5" stroke="#555555" stroke-width="0.7"/><line x1="477.2" y1="559.50" x2="715.3" y2="559.50" stroke="#555555" stroke-width="0.7"/><line x1="715.30" y1="507.3" x2="715.30" y2="559.5" stroke="#9a2218" stroke-width="1.0"/><text x="474.4" y="509.3" font-size="5.6" text-anchor="end" fill="#f2f2f2" font-weight="normal" >60</text><text x="474.4" y="526.7" font-size="5.6" text-anchor="end" fill="#f2f2f2" font-weight="normal" >40</text><text x="474.4" y="544.1" font-size="5.6" text-anchor="end" fill="#f2f2f2" font-weight="normal" >20</text><text x="474.4" y="561.5" font-size="5.6" text-anchor="end" fill="#f2f2f2" font-weight="normal" >0</text><text x="506.8" y="566.6" font-size="5.6" text-anchor="middle" fill="#f2f2f2" font-weight="normal" >1:25:00 PM</text><text x="546.4" y="566.6" font-size="5.6" text-anchor="middle" fill="#f2f2f2" font-weight="normal" >1:30:00 PM</text><text x="585.9" y="566.6" font-size="5.6" text-anchor="middle" fill="#f2f2f2" font-weight="normal" >1:35:00 PM</text><text x="625.5" y="566.6" font-size="5.6" text-anchor="middle" fill="#f2f2f2" font-weight="normal" >1:40:00 PM</text><text x="665.0" y="566.6" font-size="5.6" text-anchor="middle" fill="#f2f2f2" font-weight="normal" >1:45:00 PM</text><text x="704.5" y="566.6" font-size="5.6" text-anchor="middle" fill="#f2f2f2" font-weight="normal" >1:50:00 PM</text><polyline points="477.1,558.2 481.4,557.3 485.2,557.8 490.3,555.1 494.1,557.8 503.0,558.6 513.2,558.2 522.1,557.3 528.4,558.6 542.4,557.8 546.2,556.9 549.2,556.9 551.8,554.3 554.3,558.2 571.6,558.6 577.9,557.3 583.0,558.6 597.0,558.2 603.3,557.8 612.2,558.6 622.3,558.6 632.5,557.3 638.8,558.2 645.2,556.9 649.0,558.2 654.1,549.1 657.9,558.2 665.5,556.9 670.6,558.2 682.8,556.0 686.3,558.6 690.9,556.9 694.7,558.2 699.8,556.9 704.9,558.6 708.7,556.9 712.5,557.3 715.0,558.6" fill="none" stroke="#2a8c82" stroke-width="0.6" stroke-linejoin="round"/><polyline points="477.1,558.6 480.2,556.9 484.0,558.6 490.3,557.8 495.4,558.6 499.2,557.3 504.3,558.6 520.8,558.2 530.9,558.6 538.6,558.2 543.6,558.5 546.2,556.0 548.7,557.8 551.2,556.9 555.1,558.6 566.5,558.5 576.6,557.8 584.3,558.6 598.2,557.3 604.6,558.6 614.7,558.5 617.3,557.8 619.8,512.5 622.6,557.8 630.0,558.2 635.0,557.8 639.6,557.8 643.4,521.2 647.0,556.9 650.8,556.9 654.1,546.5 657.4,557.8 666.8,557.3 673.1,558.5 679.5,558.2 682.8,555.1 685.8,558.2 693.4,557.8 698.5,557.3 703.6,558.5 709.9,557.3 715.0,558.2" fill="none" stroke="#90c88c" stroke-width="0.75" stroke-linejoin="round"/><rect x="542.0" y="583.4" width="12" height="5.2" fill="#98f098"/><text x="556.8" y="588.0" font-size="5.6" text-anchor="start" fill="#f2f2f2" font-weight="normal" >ms/Read</text><rect x="586.5" y="583.4" width="12" height="5.2" fill="#22b4b0"/><text x="601.2" y="588.0" font-size="5.6" text-anchor="start" fill="#f2f2f2" font-weight="normal" >ms/Write</text>
<line x1="749.5" y1="507.30" x2="987.0" y2="507.30" stroke="#2c2c2c" stroke-width="0.6"/><line x1="749.5" y1="520.35" x2="987.0" y2="520.35" stroke="#2c2c2c" stroke-width="0.6"/><line x1="749.5" y1="533.40" x2="987.0" y2="533.40" stroke="#2c2c2c" stroke-width="0.6"/><line x1="749.5" y1="546.45" x2="987.0" y2="546.45" stroke="#2c2c2c" stroke-width="0.6"/><line x1="749.5" y1="559.50" x2="987.0" y2="559.50" stroke="#2c2c2c" stroke-width="0.6"/><line x1="778.80" y1="507.3" x2="778.80" y2="559.5" stroke="#2c2c2c" stroke-width="0.6"/><line x1="818.40" y1="507.3" x2="818.40" y2="559.5" stroke="#2c2c2c" stroke-width="0.6"/><line x1="858.00" y1="507.3" x2="858.00" y2="559.5" stroke="#2c2c2c" stroke-width="0.6"/><line x1="897.60" y1="507.3" x2="897.60" y2="559.5" stroke="#2c2c2c" stroke-width="0.6"/><line x1="937.20" y1="507.3" x2="937.20" y2="559.5" stroke="#2c2c2c" stroke-width="0.6"/><line x1="976.80" y1="507.3" x2="976.80" y2="559.5" stroke="#2c2c2c" stroke-width="0.6"/><line x1="749.5" y1="507.30" x2="987.0" y2="507.30" stroke="#403836" stroke-width="0.7"/><line x1="749.50" y1="507.3" x2="749.50" y2="559.5" stroke="#555555" stroke-width="0.7"/><line x1="749.5" y1="559.50" x2="987.0" y2="559.50" stroke="#555555" stroke-width="0.7"/><line x1="987.00" y1="507.3" x2="987.00" y2="559.5" stroke="#9a2218" stroke-width="1.0"/><text x="747.1" y="509.3" font-size="5.6" text-anchor="end" fill="#f2f2f2" font-weight="normal" >20</text><text x="747.1" y="522.4" font-size="5.6" text-anchor="end" fill="#f2f2f2" font-weight="normal" >15</text><text x="747.1" y="535.4" font-size="5.6" text-anchor="end" fill="#f2f2f2" font-weight="normal" >10</text><text x="747.1" y="548.5" font-size="5.6" text-anchor="end" fill="#f2f2f2" font-weight="normal" >5</text><text x="747.1" y="561.5" font-size="5.6" text-anchor="end" fill="#f2f2f2" font-weight="normal" >0</text><text x="778.8" y="566.6" font-size="5.6" text-anchor="middle" fill="#f2f2f2" font-weight="normal" >1:25:00 PM</text><text x="818.4" y="566.6" font-size="5.6" text-anchor="middle" fill="#f2f2f2" font-weight="normal" >1:30:00 PM</text><text x="858.0" y="566.6" font-size="5.6" text-anchor="middle" fill="#f2f2f2" font-weight="normal" >1:35:00 PM</text><text x="897.6" y="566.6" font-size="5.6" text-anchor="middle" fill="#f2f2f2" font-weight="normal" >1:40:00 PM</text><text x="937.2" y="566.6" font-size="5.6" text-anchor="middle" fill="#f2f2f2" font-weight="normal" >1:45:00 PM</text><text x="976.8" y="566.6" font-size="5.6" text-anchor="middle" fill="#f2f2f2" font-weight="normal" >1:50:00 PM</text><polyline points="749.5,556.1 752.0,535.6 755.6,556.1 760.1,555.2 765.2,551.5 767.7,555.2 771.6,546.8 775.4,555.2 781.7,556.1 789.3,556.1 794.9,525.4 798.7,555.2 802.0,556.1 805.3,551.5 807.8,556.1 811.6,547.8 815.9,554.3 819.0,556.1 821.5,539.4 824.8,556.1 828.1,550.6 831.6,536.6 834.9,555.2 840.0,557.1 846.3,555.2 849.6,549.6 853.9,556.1 861.5,556.5 867.9,556.1 871.2,548.7 875.5,556.5 886.9,556.5 891.9,553.3 895.2,546.8 899.0,556.1 905.9,556.1 911.5,539.4 914.8,552.4 918.6,553.3 922.4,556.5 927.4,555.2 932.0,542.7 936.3,553.3 940.1,552.0 943.9,556.1 950.2,552.4 955.3,553.3 962.9,555.2 968.0,553.3 971.3,544.0 975.6,556.1 981.9,555.2 987.0,556.1" fill="none" stroke="#c8441a" stroke-width="0.75" stroke-linejoin="round"/><polyline points="749.5,558.0 752.0,548.7 755.6,558.0 762.7,557.1 765.2,550.6 767.7,557.6 771.6,553.3 775.4,557.6 789.3,558.4 791.8,553.3 794.9,558.0 798.7,554.3 802.0,558.4 805.3,554.3 808.3,558.0 813.4,556.1 817.2,557.6 821.0,511.4 824.3,557.1 828.6,546.8 832.4,556.1 836.2,558.0 846.3,558.0 850.1,553.3 855.2,558.4 867.9,558.4 871.2,555.2 875.5,558.4 889.4,558.0 895.2,551.5 899.0,558.4 902.1,556.1 905.9,558.4 911.5,553.3 916.0,558.0 918.6,552.4 922.4,558.4 928.7,557.6 932.5,552.4 936.3,558.0 940.1,509.5 943.9,558.0 950.2,556.1 957.9,558.0 968.0,558.4 971.8,555.2 975.6,558.4 987.0,558.0" fill="none" stroke="#e09a30" stroke-width="0.75" stroke-linejoin="round"/><text x="824.6" y="588.0" font-size="5.6" text-anchor="start" fill="#f2f2f2" font-weight="normal" >MB/sec:</text><rect x="853.3" y="583.4" width="11.8" height="5.2" fill="#ffa21e"/><text x="867.5" y="588.0" font-size="5.6" text-anchor="start" fill="#f2f2f2" font-weight="normal" >Read</text><rect x="889.4" y="583.4" width="11.8" height="5.2" fill="#ff5a1c"/><text x="903.5" y="588.0" font-size="5.6" text-anchor="start" fill="#f2f2f2" font-weight="normal" >Write</text>
</svg>
</div>
</body></html>
